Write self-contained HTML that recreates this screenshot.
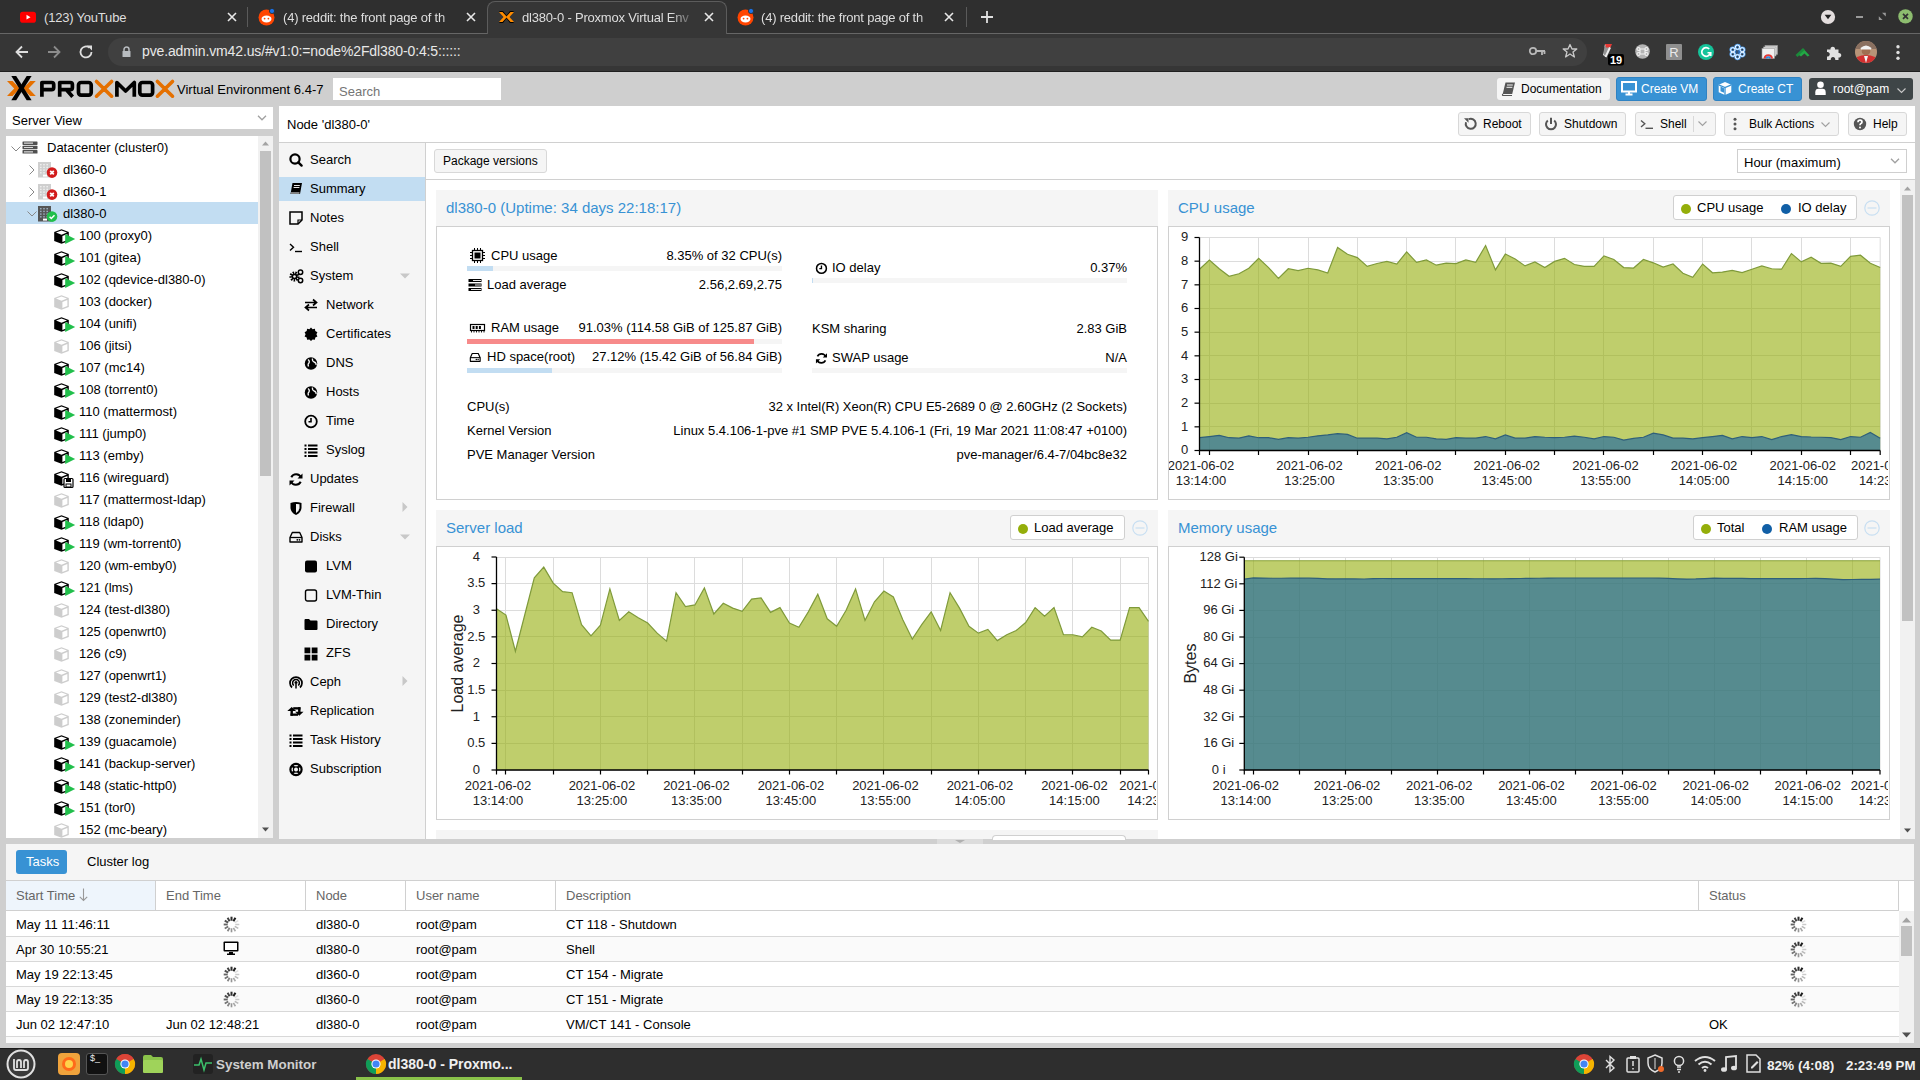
<!DOCTYPE html><html><head><meta charset="utf-8"><style>
*{box-sizing:border-box;margin:0;padding:0}
html,body{width:1920px;height:1080px;overflow:hidden;background:#cfcfcf;font-family:"Liberation Sans",sans-serif;font-size:13px;color:#000}
.a{position:absolute}
.t{position:absolute;white-space:nowrap;line-height:15px}
svg{position:absolute;overflow:visible}
</style></head><body><div class="a" style="left:0px;top:0px;width:1920px;height:34px;background:#2f2f2f"></div><div class="a" style="left:0px;top:33px;width:1920px;height:1px;background:#666"></div><div class="a" style="left:487px;top:1px;width:240px;height:40px;background:#363636;border:1px solid #5c5c5c;border-bottom:none;border-radius:8px 8px 0 0"></div><div class="a" style="left:0px;top:34px;width:1920px;height:38px;background:#363636"></div><div class="a" style="left:0px;top:71px;width:1920px;height:1px;background:#1f1f1f"></div><svg style="left:20px;top:11px;" width="16" height="12" viewBox="0 0 16 12"><rect x="0" y="0.7" width="16" height="11" rx="2.8" fill="#f00"/><path d="M6.5 3.8 L10.5 6.2 L6.5 8.6Z" fill="#fff"/></svg><div class="t" style="left:44px;top:10px;font-size:13px;color:#dedede;letter-spacing:-0.2px">(123) YouTube</div><svg style="left:227px;top:12px;" width="10" height="10" viewBox="0 0 10 10"><path d="M1 1L9 9M9 1L1 9" stroke="#e8e8e8" stroke-width="1.6"/></svg><div class="a" style="left:247px;top:7px;width:1px;height:20px;background:#5a5a5a"></div><svg style="left:258px;top:8px;" width="18" height="18" viewBox="0 0 18 18"><circle cx="8.5" cy="9.5" r="8" fill="#ff4500"/><ellipse cx="8.5" cy="11" rx="5" ry="3.4" fill="#fff"/><circle cx="6.6" cy="10.6" r="0.9" fill="#ff4500"/><circle cx="10.4" cy="10.6" r="0.9" fill="#ff4500"/><circle cx="14" cy="3" r="2.6" fill="#1a73e8" stroke="#2a2a2a" stroke-width="0.8"/></svg><div class="t" style="left:283px;top:10px;font-size:13px;color:#dedede;letter-spacing:-0.2px;width:185px;overflow:hidden;-webkit-mask-image:linear-gradient(90deg,#000 85%,transparent)">(4) reddit: the front page of th</div><svg style="left:466px;top:12px;" width="10" height="10" viewBox="0 0 10 10"><path d="M1 1L9 9M9 1L1 9" stroke="#e8e8e8" stroke-width="1.6"/></svg><svg style="left:498px;top:9px;" width="17" height="16" viewBox="0 0 17 16"><path d="M1 2 L5 2 L8.5 6.5 L12 2 L16 2 L10.5 8 L16 14 L12 14 L8.5 9.5 L5 14 L1 14 L6.5 8Z" fill="#000"/><path d="M1 3 L4.5 3 L9 8 L4.5 13 L1 13 L5.5 8Z" fill="#ff8c00"/><path d="M16 3 L12.5 3 L8 8 L12.5 13 L16 13 L11.5 8Z" fill="#ff8c00"/></svg><div class="t" style="left:522px;top:10px;font-size:13px;color:#dedede;letter-spacing:-0.2px;width:175px;overflow:hidden;-webkit-mask-image:linear-gradient(90deg,#000 85%,transparent)">dl380-0 - Proxmox Virtual Env</div><svg style="left:704px;top:12px;" width="10" height="10" viewBox="0 0 10 10"><path d="M1 1L9 9M9 1L1 9" stroke="#e8e8e8" stroke-width="1.6"/></svg><svg style="left:737px;top:8px;" width="18" height="18" viewBox="0 0 18 18"><circle cx="8.5" cy="9.5" r="8" fill="#ff4500"/><ellipse cx="8.5" cy="11" rx="5" ry="3.4" fill="#fff"/><circle cx="6.6" cy="10.6" r="0.9" fill="#ff4500"/><circle cx="10.4" cy="10.6" r="0.9" fill="#ff4500"/><circle cx="14" cy="3" r="2.6" fill="#1a73e8" stroke="#2a2a2a" stroke-width="0.8"/></svg><div class="t" style="left:761px;top:10px;font-size:13px;color:#dedede;letter-spacing:-0.2px;width:185px;overflow:hidden;-webkit-mask-image:linear-gradient(90deg,#000 85%,transparent)">(4) reddit: the front page of th</div><svg style="left:944px;top:12px;" width="10" height="10" viewBox="0 0 10 10"><path d="M1 1L9 9M9 1L1 9" stroke="#e8e8e8" stroke-width="1.6"/></svg><div class="a" style="left:966px;top:7px;width:1px;height:20px;background:#5a5a5a"></div><svg style="left:979px;top:9px;" width="16" height="16" viewBox="0 0 16 16"><path d="M8 2V14M2 8H14" stroke="#e0e0e0" stroke-width="1.8"/></svg><svg style="left:1819px;top:8px;" width="18" height="18" viewBox="0 0 18 18"><circle cx="9" cy="9" r="7.1" fill="#e4dede"/><path d="M5.6 6.8 L12.4 6.8 L9 11.2Z" fill="#222"/></svg><div class="a" style="left:1856px;top:16px;width:7px;height:2px;background:#9a9a9a"></div><svg style="left:1878px;top:12px;" width="9" height="9" viewBox="0 0 9 9"><path d="M4 0.8H7.8V4.6Z M0.8 4.2V8H4.6Z" fill="#9a9a9a"/></svg><svg style="left:1896px;top:7px;" width="18" height="18" viewBox="0 0 18 18"><circle cx="9.5" cy="9.4" r="7.2" fill="#8dbd6f"/><path d="M7 6.9L12 11.9M12 6.9L7 11.9" stroke="#333" stroke-width="1.7"/></svg><svg style="left:14px;top:44px;" width="16" height="16" viewBox="0 0 16 16"><path d="M14 8H2.5M8 2.5L2.5 8L8 13.5" style="stroke:#dedede;stroke-width:1.8;fill:none"/></svg><svg style="left:46px;top:44px;" width="16" height="16" viewBox="0 0 16 16"><path d="M2 8H13.5M8 2.5L13.5 8L8 13.5" style="stroke:#8c8c8c;stroke-width:1.8;fill:none"/></svg><svg style="left:78px;top:44px;" width="16" height="16" viewBox="0 0 16 16"><path d="M13.5 8A5.5 5.5 0 1 1 11.5 3.7" style="stroke:#dedede;stroke-width:1.8;fill:none"/><path d="M9 1.5L14 1.5L14 6.5Z" fill="#dedede"/></svg><div class="a" style="left:108px;top:38px;width:1479px;height:28px;background:#404040;border-radius:14px"></div><svg style="left:122px;top:46px;" width="9" height="11" viewBox="0 0 9 11"><path d="M2 5V3.5A2.5 2.5 0 0 1 7 3.5V5" stroke="#b8bcc0" stroke-width="1.5" fill="none"/><rect x="0.5" y="5" width="8" height="6" rx="0.5" fill="#b8bcc0"/></svg><div class="t" style="left:142px;top:44px;font-size:14px;color:#e8e8e8;letter-spacing:-0.13px">pve.admin.vm42.us/#v1:0:=node%2Fdl380-0:4:5::::::</div><svg style="left:1529px;top:46px;" width="17" height="10" viewBox="0 0 17 10"><circle cx="4" cy="5" r="3.2" stroke="#b8b8b8" stroke-width="1.8" fill="none"/><path d="M7 5H16M13 5V9M15.5 5V8" stroke="#b8b8b8" stroke-width="1.8" fill="none"/></svg><svg style="left:1562px;top:43px;" width="16" height="16" viewBox="0 0 16 16"><path d="M8 1.5L10 6H14.8L11 9L12.4 14L8 11L3.6 14L5 9L1.2 6H6Z" stroke="#c8c8c8" stroke-width="1.3" fill="none" stroke-linejoin="round"/></svg><svg style="left:1602px;top:43px;" width="22" height="23" viewBox="0 0 22 23"><path d="M3 1H9L8 5Z" fill="#e53935"/><path d="M3 1L9 3L4 14L1 12Z" fill="#f0f0f0"/><circle cx="8" cy="8" r="7" fill="#3a3a3a" opacity="0.5"/><path d="M3 1H10L8.5 4.5H4Z" fill="#e53935"/><path d="M8 4.5L3.5 14" stroke="#eee" stroke-width="2"/><rect x="6" y="11" width="16" height="11.5" rx="2" fill="#000"/><text x="14" y="21" font-family="Liberation Sans" font-size="11" font-weight="bold" fill="#fff" text-anchor="middle">19</text></svg><svg style="left:1635px;top:44px;" width="15" height="15" viewBox="0 0 15 15"><circle cx="7.5" cy="7.5" r="7.3" fill="#b4b4b4"/><path d="M5 5H10V10H5ZM5 5A1.5 1.5 0 1 1 3.5 3.5A1.5 1.5 0 0 1 5 5M10 5A1.5 1.5 0 1 0 11.5 3.5A1.5 1.5 0 0 0 10 5M5 10A1.5 1.5 0 1 0 3.5 11.5A1.5 1.5 0 0 0 5 10M10 10A1.5 1.5 0 1 1 11.5 11.5A1.5 1.5 0 0 1 10 10" stroke="#f2f2f2" stroke-width="1.1" fill="none"/></svg><svg style="left:1666px;top:44px;" width="16" height="16" viewBox="0 0 16 16"><rect x="0" y="0" width="16" height="16" rx="1" fill="#8f8f8f"/><text x="8" y="13" font-family="Liberation Sans" font-size="13" fill="#eaeaea" text-anchor="middle">R</text></svg><svg style="left:1698px;top:44px;" width="16" height="16" viewBox="0 0 16 16"><circle cx="8" cy="8" r="8" fill="#15c39a"/><path d="M11.2 5A4.3 4.3 0 1 0 12.2 9.2" stroke="#fff" stroke-width="1.7" fill="none"/><path d="M9.5 8.8H12.8V12" stroke="#fff" stroke-width="1.5" fill="none"/></svg><svg style="left:1729px;top:44px;" width="17" height="16" viewBox="0 0 17 16"><g stroke="#4f9ff0" stroke-width="2.4" fill="none" stroke-linecap="round"><circle cx="8.5" cy="3.2" r="2.2"/><circle cx="8.5" cy="12.8" r="2.2"/><circle cx="3.8" cy="5.8" r="2.2"/><circle cx="13.2" cy="5.8" r="2.2"/><circle cx="3.8" cy="10.2" r="2.2"/><circle cx="13.2" cy="10.2" r="2.2"/></g><g stroke="#fff" stroke-width="1" fill="none"><circle cx="8.5" cy="3.2" r="2.2"/><circle cx="8.5" cy="12.8" r="2.2"/><circle cx="3.8" cy="5.8" r="2.2"/><circle cx="13.2" cy="5.8" r="2.2"/><circle cx="3.8" cy="10.2" r="2.2"/><circle cx="13.2" cy="10.2" r="2.2"/></g><path d="M6 8H11M9.5 6.5L11 8L9.5 9.5" stroke="#2a6fc0" stroke-width="1.2" fill="none"/></svg><svg style="left:1762px;top:45px;" width="16" height="14" viewBox="0 0 16 14"><rect x="3" y="0.5" width="12.5" height="9" fill="#d8d8d8" stroke="#999" stroke-width="0.6"/><rect x="1.5" y="2" width="12.5" height="9" fill="#e2e2e2" stroke="#999" stroke-width="0.6"/><rect x="0" y="3.5" width="12.5" height="10" fill="#f0f0f0" stroke="#999" stroke-width="0.6"/><path d="M2.5 13.5A3.8 3.8 0 0 1 10 13.5" stroke="#e53935" stroke-width="2" fill="none"/><path d="M4.3 13.5A2 2 0 0 1 8.2 13.5" stroke="#1e88e5" stroke-width="1.6" fill="none"/></svg><svg style="left:1795px;top:47px;" width="15" height="10" viewBox="0 0 15 10"><path d="M0.5 8L8 1L10 3L2.5 10Z" fill="#1b8a3a"/><path d="M4 8L9.5 3L14.5 8.5L12.5 9.5L9.5 6.5L6 9.5Z" fill="#22a845"/></svg><svg style="left:1826px;top:45px;" width="16" height="15" viewBox="0 0 16 15"><path d="M1 4.5H4.5A2.3 2.3 0 1 1 9 4.5H12.5V8A2.3 2.3 0 1 1 12.5 12.5V15H9.2A2.3 2.3 0 1 0 4.8 15H1V11.5A2.3 2.3 0 1 0 1 7Z" fill="#e2e2e2"/></svg><svg style="left:1855px;top:41px;" width="22" height="22" viewBox="0 0 22 22"><defs><clipPath id="av"><circle cx="11" cy="11" r="11"/></clipPath></defs><g clip-path="url(#av)"><rect width="22" height="22" fill="#b89478"/><rect x="0" y="0" width="22" height="8" fill="#8a7060"/><path d="M1 22L2 16Q11 12 20 16L21 22Z" fill="#d23030"/><path d="M9 15L11 22L13 15Z" fill="#f4f4f4"/><circle cx="11" cy="10" r="4.3" fill="#a06f52"/><path d="M5.5 7Q11 2 16.5 7L16 8.5H6Z" fill="#f2f2f2"/></g></svg><svg style="left:1896px;top:45px;" width="4" height="15" viewBox="0 0 4 15"><circle cx="2" cy="1.8" r="1.7" fill="#e0e0e0"/><circle cx="2" cy="7.5" r="1.7" fill="#e0e0e0"/><circle cx="2" cy="13.2" r="1.7" fill="#e0e0e0"/></svg><div class="a" style="left:0px;top:72px;width:1920px;height:1008px;background:#cfcfcf"></div><svg style="left:0px;top:72px;" width="180" height="34" viewBox="0 0 180 34"><path d="M7 9L12.6 9L19.8 16.4L12.6 24L7 24L14.2 16.4Z" fill="#e57000"/><path d="M35.8 9L30.2 9L23 16.4L30.2 24L35.8 24L28.6 16.4Z" fill="#e57000"/><path d="M11.3 4L16.2 4L31.6 28.2L26.7 28.2Z" fill="#000"/><path d="M26.7 4L31.6 4L16.2 28.2L11.3 28.2Z" fill="#000"/><g stroke="#000" stroke-width="3.7" fill="none" stroke-linejoin="round"><path d="M41.9 24.8V10.5H51.6Q53.7 10.5 53.7 12.6V15.6Q53.7 17.7 51.6 17.7H42"/><path d="M59.7 24.8V10.5H70.3Q72.4 10.5 72.4 12.6V15.6Q72.4 17.7 70.3 17.7H60M66.5 17.7L72.6 24.8"/><rect x="78.5" y="10.5" width="12.7" height="12.7" rx="2.6"/><path d="M116.9 24.8V10.5L125.6 19L134.3 10.5V24.8"/><rect x="139.8" y="10.5" width="12.8" height="12.7" rx="2.6"/></g><path d="M96.5 9.5L111.6 24.2M111.6 9.5L96.5 24.2M157.4 9.5L172.5 24.2M172.5 9.5L157.4 24.2" stroke="#e57000" stroke-width="3.6" stroke-linecap="round"/></svg><div class="t" style="left:177px;top:82px;">Virtual Environment 6.4-7</div><div class="a" style="left:333px;top:78px;width:168px;height:22px;background:#fff"></div><div class="t" style="left:339px;top:84px;color:#757575">Search</div><div class="a" style="left:1497px;top:78px;width:113px;height:22px;background:#f5f5f5;border-radius:3px"></div><svg style="left:1501px;top:81px;" width="15" height="16" viewBox="0 0 15 16"><path d="M4.5 1.5H14L11.2 13H1.7Z" fill="#555"/><path d="M6 4H11.8M5.5 6.3H11.3" stroke="#f5f5f5" stroke-width="1"/><path d="M1.7 13Q1 14.5 2.5 14.5H11" stroke="#555" stroke-width="1.2" fill="none"/></svg><div class="t" style="left:1521px;top:82px;font-size:12px">Documentation</div><div class="a" style="left:1616px;top:77px;width:91px;height:24px;background:#3892d4;border:1px solid #2f82c2;border-radius:3px"></div><svg style="left:1621px;top:81px;" width="16" height="15" viewBox="0 0 16 15"><rect x="1" y="1" width="14" height="9.5" stroke="#fff" stroke-width="2" fill="none"/><path d="M4.5 13.5H11.5M8 10.5V13.5" stroke="#fff" stroke-width="2"/></svg><div class="t" style="left:1641px;top:82px;color:#fff;font-size:12px">Create VM</div><div class="a" style="left:1713px;top:77px;width:89px;height:24px;background:#3892d4;border:1px solid #2f82c2;border-radius:3px"></div><svg style="left:1718px;top:81px;" width="14" height="15" viewBox="0 0 14 15"><path d="M7 1L13.3 3.8V11.2L7 14L0.7 11.2V3.8Z" fill="#fff"/><path d="M0.7 3.8L7 6.6L13.3 3.8M7 6.6V14" stroke="#3892d4" stroke-width="1.3" fill="none"/><path d="M2.5 5.5V10.2L6 11.8V7.2Z" fill="#3892d4"/></svg><div class="t" style="left:1738px;top:82px;color:#fff;font-size:12px">Create CT</div><div class="a" style="left:1809px;top:78px;width:104px;height:22px;background:#3e4547;border-radius:3px"></div><svg style="left:1815px;top:81px;" width="11" height="14" viewBox="0 0 11 14"><circle cx="5.5" cy="3.8" r="3.3" fill="#fff"/><path d="M0.3 14V11.2Q0.3 7.8 3.5 7.8H7.5Q10.7 7.8 10.7 11.2V14Z" fill="#fff"/></svg><div class="t" style="left:1833px;top:82px;color:#fff;font-size:12px">root@pam</div><svg style="left:1897px;top:88px;" width="9" height="5" viewBox="0 0 9 5"><path d="M0.5 0.5L4.5 4.5L8.5 0.5" stroke="#c8c8c8" stroke-width="1.1" fill="none"/></svg><div class="a" style="left:6px;top:107px;width:267px;height:22px;background:#fff"></div><div class="t" style="left:12px;top:113px;">Server View</div><svg style="left:257px;top:115px;" width="10" height="6" viewBox="0 0 10 6"><path d="M1 0.8L5 4.8L9 0.8" stroke="#a0a0a0" stroke-width="1.3" fill="none"/></svg><div class="a" style="left:6px;top:136px;width:267px;height:702px;background:#fff"></div><div class="a" style="left:258px;top:136px;width:15px;height:702px;background:#f1f1f1"></div><svg style="left:262px;top:141px;" width="7" height="5" viewBox="0 0 7 5"><path d="M0 4.5L3.5 0.5L7 4.5Z" fill="#a3a3a3"/></svg><div class="a" style="left:260px;top:151px;width:11px;height:325px;background:#c1c1c1"></div><svg style="left:262px;top:827px;" width="7" height="5" viewBox="0 0 7 5"><path d="M0 0.5L3.5 4.5L7 0.5Z" fill="#505050"/></svg><div class="a" style="left:6px;top:202px;width:252px;height:22px;background:#c2ddf2"></div><svg style="left:11px;top:146px;" width="10" height="6" viewBox="0 0 10 6"><path d="M0.5 0.5L5 5L9.5 0.5" stroke="#888" stroke-width="1" fill="none"/></svg><svg style="left:22px;top:141px;" width="16" height="13" viewBox="0 0 16 13"><rect x="0.5" y="0.5" width="15" height="3.4" rx="0.6" fill="#505050"/><rect x="0.5" y="4.8" width="15" height="3.4" rx="0.6" fill="#505050"/><rect x="0.5" y="9.1" width="15" height="3.4" rx="0.6" fill="#505050"/><path d="M2 2.2H11M2 6.5H11M2 10.8H11" stroke="#d8d8d8" stroke-width="1.2"/></svg><div class="t" style="left:47px;top:140px;">Datacenter (cluster0)</div><svg style="left:29px;top:165px;" width="6" height="10" viewBox="0 0 6 10"><path d="M0.5 0.5L5 5L0.5 9.5" stroke="#888" stroke-width="1" fill="none"/></svg><svg style="left:38px;top:162px;" width="20" height="17" viewBox="0 0 20 17"><rect x="0" y="0" width="13" height="15.5" fill="#cfcfcf"/><rect x="2.0" y="2.0" width="1.6" height="1.4" fill="#eee"/><rect x="5.2" y="2.0" width="1.6" height="1.4" fill="#eee"/><rect x="8.4" y="2.0" width="1.6" height="1.4" fill="#eee"/><rect x="2.0" y="4.7" width="1.6" height="1.4" fill="#eee"/><rect x="5.2" y="4.7" width="1.6" height="1.4" fill="#eee"/><rect x="8.4" y="4.7" width="1.6" height="1.4" fill="#eee"/><rect x="2.0" y="7.4" width="1.6" height="1.4" fill="#eee"/><rect x="5.2" y="7.4" width="1.6" height="1.4" fill="#eee"/><rect x="8.4" y="7.4" width="1.6" height="1.4" fill="#eee"/><rect x="2.0" y="10.1" width="1.6" height="1.4" fill="#eee"/><rect x="5.2" y="10.1" width="1.6" height="1.4" fill="#eee"/><rect x="8.4" y="10.1" width="1.6" height="1.4" fill="#eee"/><rect x="5" y="12.6" width="4" height="2" fill="#fff"/><circle cx="14" cy="10.6" r="5.3" fill="#d21c1c"/><path d="M12.2 8.8L15.8 12.4M15.8 8.8L12.2 12.4" stroke="#fff" stroke-width="1.7"/></svg><div class="t" style="left:63px;top:162px;">dl360-0</div><svg style="left:29px;top:187px;" width="6" height="10" viewBox="0 0 6 10"><path d="M0.5 0.5L5 5L0.5 9.5" stroke="#888" stroke-width="1" fill="none"/></svg><svg style="left:38px;top:184px;" width="20" height="17" viewBox="0 0 20 17"><rect x="0" y="0" width="13" height="15.5" fill="#cfcfcf"/><rect x="2.0" y="2.0" width="1.6" height="1.4" fill="#eee"/><rect x="5.2" y="2.0" width="1.6" height="1.4" fill="#eee"/><rect x="8.4" y="2.0" width="1.6" height="1.4" fill="#eee"/><rect x="2.0" y="4.7" width="1.6" height="1.4" fill="#eee"/><rect x="5.2" y="4.7" width="1.6" height="1.4" fill="#eee"/><rect x="8.4" y="4.7" width="1.6" height="1.4" fill="#eee"/><rect x="2.0" y="7.4" width="1.6" height="1.4" fill="#eee"/><rect x="5.2" y="7.4" width="1.6" height="1.4" fill="#eee"/><rect x="8.4" y="7.4" width="1.6" height="1.4" fill="#eee"/><rect x="2.0" y="10.1" width="1.6" height="1.4" fill="#eee"/><rect x="5.2" y="10.1" width="1.6" height="1.4" fill="#eee"/><rect x="8.4" y="10.1" width="1.6" height="1.4" fill="#eee"/><rect x="5" y="12.6" width="4" height="2" fill="#fff"/><circle cx="14" cy="10.6" r="5.3" fill="#d21c1c"/><path d="M12.2 8.8L15.8 12.4M15.8 8.8L12.2 12.4" stroke="#fff" stroke-width="1.7"/></svg><div class="t" style="left:63px;top:184px;">dl360-1</div><svg style="left:27px;top:211px;" width="10" height="6" viewBox="0 0 10 6"><path d="M0.5 0.5L5 5L9.5 0.5" stroke="#888" stroke-width="1" fill="none"/></svg><svg style="left:38px;top:206px;" width="20" height="17" viewBox="0 0 20 17"><rect x="0" y="0" width="13" height="15.5" fill="#555"/><rect x="2.0" y="2.0" width="1.6" height="1.4" fill="#9ab"/><rect x="5.2" y="2.0" width="1.6" height="1.4" fill="#9ab"/><rect x="8.4" y="2.0" width="1.6" height="1.4" fill="#9ab"/><rect x="2.0" y="4.7" width="1.6" height="1.4" fill="#9ab"/><rect x="5.2" y="4.7" width="1.6" height="1.4" fill="#9ab"/><rect x="8.4" y="4.7" width="1.6" height="1.4" fill="#9ab"/><rect x="2.0" y="7.4" width="1.6" height="1.4" fill="#9ab"/><rect x="5.2" y="7.4" width="1.6" height="1.4" fill="#9ab"/><rect x="8.4" y="7.4" width="1.6" height="1.4" fill="#9ab"/><rect x="2.0" y="10.1" width="1.6" height="1.4" fill="#9ab"/><rect x="5.2" y="10.1" width="1.6" height="1.4" fill="#9ab"/><rect x="8.4" y="10.1" width="1.6" height="1.4" fill="#9ab"/><rect x="5" y="12.6" width="4" height="2" fill="#fff"/><circle cx="14" cy="10.6" r="5.3" fill="#21bf4b"/><path d="M11.6 10.8L13.3 12.5L16.5 9.2" stroke="#fff" stroke-width="1.5" fill="none"/></svg><div class="t" style="left:63px;top:206px;">dl380-0</div><div class="a" style="left:6px;top:136px;width:252px;height:702px;overflow:hidden"><svg style="left:48px;top:93px;" width="22" height="16" viewBox="0 0 22 16"><path d="M7.5 0.2L14.8 3.1V11.9L7.5 14.8L0.2 11.9V3.1Z" fill="#000"/><path d="M7.5 1.5L13 3.6L7.5 5.8L2 3.6Z" fill="#fff"/><path d="M8.4 7.1L13.4 5.1V11L8.4 13.1Z" fill="#fff"/><path d="M11.2 5L21.2 10L11.2 15Z" fill="#21bf4b"/></svg><div class="t" style="left:73px;top:92px;">100 (proxy0)</div><svg style="left:48px;top:115px;" width="22" height="16" viewBox="0 0 22 16"><path d="M7.5 0.2L14.8 3.1V11.9L7.5 14.8L0.2 11.9V3.1Z" fill="#000"/><path d="M7.5 1.5L13 3.6L7.5 5.8L2 3.6Z" fill="#fff"/><path d="M8.4 7.1L13.4 5.1V11L8.4 13.1Z" fill="#fff"/><path d="M11.2 5L21.2 10L11.2 15Z" fill="#21bf4b"/></svg><div class="t" style="left:73px;top:114px;">101 (gitea)</div><svg style="left:48px;top:137px;" width="22" height="16" viewBox="0 0 22 16"><path d="M7.5 0.2L14.8 3.1V11.9L7.5 14.8L0.2 11.9V3.1Z" fill="#000"/><path d="M7.5 1.5L13 3.6L7.5 5.8L2 3.6Z" fill="#fff"/><path d="M8.4 7.1L13.4 5.1V11L8.4 13.1Z" fill="#fff"/><path d="M11.2 5L21.2 10L11.2 15Z" fill="#21bf4b"/></svg><div class="t" style="left:73px;top:136px;">102 (qdevice-dl380-0)</div><svg style="left:48px;top:159px;" width="22" height="16" viewBox="0 0 22 16"><path d="M7.5 0.2L14.8 3.1V11.9L7.5 14.8L0.2 11.9V3.1Z" fill="#cdcdcd"/><path d="M7.5 1.5L13 3.6L7.5 5.8L2 3.6Z" fill="#fff"/><path d="M8.4 7.1L13.4 5.1V11L8.4 13.1Z" fill="#fff"/></svg><div class="t" style="left:73px;top:158px;">103 (docker)</div><svg style="left:48px;top:181px;" width="22" height="16" viewBox="0 0 22 16"><path d="M7.5 0.2L14.8 3.1V11.9L7.5 14.8L0.2 11.9V3.1Z" fill="#000"/><path d="M7.5 1.5L13 3.6L7.5 5.8L2 3.6Z" fill="#fff"/><path d="M8.4 7.1L13.4 5.1V11L8.4 13.1Z" fill="#fff"/><path d="M11.2 5L21.2 10L11.2 15Z" fill="#21bf4b"/></svg><div class="t" style="left:73px;top:180px;">104 (unifi)</div><svg style="left:48px;top:203px;" width="22" height="16" viewBox="0 0 22 16"><path d="M7.5 0.2L14.8 3.1V11.9L7.5 14.8L0.2 11.9V3.1Z" fill="#cdcdcd"/><path d="M7.5 1.5L13 3.6L7.5 5.8L2 3.6Z" fill="#fff"/><path d="M8.4 7.1L13.4 5.1V11L8.4 13.1Z" fill="#fff"/></svg><div class="t" style="left:73px;top:202px;">106 (jitsi)</div><svg style="left:48px;top:225px;" width="22" height="16" viewBox="0 0 22 16"><path d="M7.5 0.2L14.8 3.1V11.9L7.5 14.8L0.2 11.9V3.1Z" fill="#000"/><path d="M7.5 1.5L13 3.6L7.5 5.8L2 3.6Z" fill="#fff"/><path d="M8.4 7.1L13.4 5.1V11L8.4 13.1Z" fill="#fff"/><path d="M11.2 5L21.2 10L11.2 15Z" fill="#21bf4b"/></svg><div class="t" style="left:73px;top:224px;">107 (mc14)</div><svg style="left:48px;top:247px;" width="22" height="16" viewBox="0 0 22 16"><path d="M7.5 0.2L14.8 3.1V11.9L7.5 14.8L0.2 11.9V3.1Z" fill="#000"/><path d="M7.5 1.5L13 3.6L7.5 5.8L2 3.6Z" fill="#fff"/><path d="M8.4 7.1L13.4 5.1V11L8.4 13.1Z" fill="#fff"/><path d="M11.2 5L21.2 10L11.2 15Z" fill="#21bf4b"/></svg><div class="t" style="left:73px;top:246px;">108 (torrent0)</div><svg style="left:48px;top:269px;" width="22" height="16" viewBox="0 0 22 16"><path d="M7.5 0.2L14.8 3.1V11.9L7.5 14.8L0.2 11.9V3.1Z" fill="#000"/><path d="M7.5 1.5L13 3.6L7.5 5.8L2 3.6Z" fill="#fff"/><path d="M8.4 7.1L13.4 5.1V11L8.4 13.1Z" fill="#fff"/><path d="M11.2 5L21.2 10L11.2 15Z" fill="#21bf4b"/></svg><div class="t" style="left:73px;top:268px;">110 (mattermost)</div><svg style="left:48px;top:291px;" width="22" height="16" viewBox="0 0 22 16"><path d="M7.5 0.2L14.8 3.1V11.9L7.5 14.8L0.2 11.9V3.1Z" fill="#000"/><path d="M7.5 1.5L13 3.6L7.5 5.8L2 3.6Z" fill="#fff"/><path d="M8.4 7.1L13.4 5.1V11L8.4 13.1Z" fill="#fff"/><path d="M11.2 5L21.2 10L11.2 15Z" fill="#21bf4b"/></svg><div class="t" style="left:73px;top:290px;">111 (jump0)</div><svg style="left:48px;top:313px;" width="22" height="16" viewBox="0 0 22 16"><path d="M7.5 0.2L14.8 3.1V11.9L7.5 14.8L0.2 11.9V3.1Z" fill="#000"/><path d="M7.5 1.5L13 3.6L7.5 5.8L2 3.6Z" fill="#fff"/><path d="M8.4 7.1L13.4 5.1V11L8.4 13.1Z" fill="#fff"/><path d="M11.2 5L21.2 10L11.2 15Z" fill="#21bf4b"/></svg><div class="t" style="left:73px;top:312px;">113 (emby)</div><svg style="left:48px;top:335px;" width="22" height="18" viewBox="0 0 22 18"><path d="M7.5 0.2L14.8 3.1V11.9L7.5 14.8L0.2 11.9V3.1Z" fill="#000"/><path d="M7.5 1.5L13 3.6L7.5 5.8L2 3.6Z" fill="#fff"/><path d="M8.4 7.1L13.4 5.1V11L8.4 13.1Z" fill="#fff"/><rect x="10" y="7.5" width="9" height="9" rx="1" fill="#fff" stroke="#000" stroke-width="1.2"/><rect x="12" y="8" width="5" height="3" fill="#000"/><rect x="12" y="13" width="5" height="3" fill="none" stroke="#000" stroke-width="1"/></svg><div class="t" style="left:73px;top:334px;">116 (wireguard)</div><svg style="left:48px;top:357px;" width="22" height="16" viewBox="0 0 22 16"><path d="M7.5 0.2L14.8 3.1V11.9L7.5 14.8L0.2 11.9V3.1Z" fill="#cdcdcd"/><path d="M7.5 1.5L13 3.6L7.5 5.8L2 3.6Z" fill="#fff"/><path d="M8.4 7.1L13.4 5.1V11L8.4 13.1Z" fill="#fff"/></svg><div class="t" style="left:73px;top:356px;">117 (mattermost-ldap)</div><svg style="left:48px;top:379px;" width="22" height="16" viewBox="0 0 22 16"><path d="M7.5 0.2L14.8 3.1V11.9L7.5 14.8L0.2 11.9V3.1Z" fill="#000"/><path d="M7.5 1.5L13 3.6L7.5 5.8L2 3.6Z" fill="#fff"/><path d="M8.4 7.1L13.4 5.1V11L8.4 13.1Z" fill="#fff"/><path d="M11.2 5L21.2 10L11.2 15Z" fill="#21bf4b"/></svg><div class="t" style="left:73px;top:378px;">118 (ldap0)</div><svg style="left:48px;top:401px;" width="22" height="16" viewBox="0 0 22 16"><path d="M7.5 0.2L14.8 3.1V11.9L7.5 14.8L0.2 11.9V3.1Z" fill="#000"/><path d="M7.5 1.5L13 3.6L7.5 5.8L2 3.6Z" fill="#fff"/><path d="M8.4 7.1L13.4 5.1V11L8.4 13.1Z" fill="#fff"/><path d="M11.2 5L21.2 10L11.2 15Z" fill="#21bf4b"/></svg><div class="t" style="left:73px;top:400px;">119 (wm-torrent0)</div><svg style="left:48px;top:423px;" width="22" height="16" viewBox="0 0 22 16"><path d="M7.5 0.2L14.8 3.1V11.9L7.5 14.8L0.2 11.9V3.1Z" fill="#cdcdcd"/><path d="M7.5 1.5L13 3.6L7.5 5.8L2 3.6Z" fill="#fff"/><path d="M8.4 7.1L13.4 5.1V11L8.4 13.1Z" fill="#fff"/></svg><div class="t" style="left:73px;top:422px;">120 (wm-emby0)</div><svg style="left:48px;top:445px;" width="22" height="16" viewBox="0 0 22 16"><path d="M7.5 0.2L14.8 3.1V11.9L7.5 14.8L0.2 11.9V3.1Z" fill="#000"/><path d="M7.5 1.5L13 3.6L7.5 5.8L2 3.6Z" fill="#fff"/><path d="M8.4 7.1L13.4 5.1V11L8.4 13.1Z" fill="#fff"/><path d="M11.2 5L21.2 10L11.2 15Z" fill="#21bf4b"/></svg><div class="t" style="left:73px;top:444px;">121 (lms)</div><svg style="left:48px;top:467px;" width="22" height="16" viewBox="0 0 22 16"><path d="M7.5 0.2L14.8 3.1V11.9L7.5 14.8L0.2 11.9V3.1Z" fill="#cdcdcd"/><path d="M7.5 1.5L13 3.6L7.5 5.8L2 3.6Z" fill="#fff"/><path d="M8.4 7.1L13.4 5.1V11L8.4 13.1Z" fill="#fff"/></svg><div class="t" style="left:73px;top:466px;">124 (test-dl380)</div><svg style="left:48px;top:489px;" width="22" height="16" viewBox="0 0 22 16"><path d="M7.5 0.2L14.8 3.1V11.9L7.5 14.8L0.2 11.9V3.1Z" fill="#cdcdcd"/><path d="M7.5 1.5L13 3.6L7.5 5.8L2 3.6Z" fill="#fff"/><path d="M8.4 7.1L13.4 5.1V11L8.4 13.1Z" fill="#fff"/></svg><div class="t" style="left:73px;top:488px;">125 (openwrt0)</div><svg style="left:48px;top:511px;" width="22" height="16" viewBox="0 0 22 16"><path d="M7.5 0.2L14.8 3.1V11.9L7.5 14.8L0.2 11.9V3.1Z" fill="#cdcdcd"/><path d="M7.5 1.5L13 3.6L7.5 5.8L2 3.6Z" fill="#fff"/><path d="M8.4 7.1L13.4 5.1V11L8.4 13.1Z" fill="#fff"/></svg><div class="t" style="left:73px;top:510px;">126 (c9)</div><svg style="left:48px;top:533px;" width="22" height="16" viewBox="0 0 22 16"><path d="M7.5 0.2L14.8 3.1V11.9L7.5 14.8L0.2 11.9V3.1Z" fill="#cdcdcd"/><path d="M7.5 1.5L13 3.6L7.5 5.8L2 3.6Z" fill="#fff"/><path d="M8.4 7.1L13.4 5.1V11L8.4 13.1Z" fill="#fff"/></svg><div class="t" style="left:73px;top:532px;">127 (openwrt1)</div><svg style="left:48px;top:555px;" width="22" height="16" viewBox="0 0 22 16"><path d="M7.5 0.2L14.8 3.1V11.9L7.5 14.8L0.2 11.9V3.1Z" fill="#cdcdcd"/><path d="M7.5 1.5L13 3.6L7.5 5.8L2 3.6Z" fill="#fff"/><path d="M8.4 7.1L13.4 5.1V11L8.4 13.1Z" fill="#fff"/></svg><div class="t" style="left:73px;top:554px;">129 (test2-dl380)</div><svg style="left:48px;top:577px;" width="22" height="16" viewBox="0 0 22 16"><path d="M7.5 0.2L14.8 3.1V11.9L7.5 14.8L0.2 11.9V3.1Z" fill="#cdcdcd"/><path d="M7.5 1.5L13 3.6L7.5 5.8L2 3.6Z" fill="#fff"/><path d="M8.4 7.1L13.4 5.1V11L8.4 13.1Z" fill="#fff"/></svg><div class="t" style="left:73px;top:576px;">138 (zoneminder)</div><svg style="left:48px;top:599px;" width="22" height="16" viewBox="0 0 22 16"><path d="M7.5 0.2L14.8 3.1V11.9L7.5 14.8L0.2 11.9V3.1Z" fill="#000"/><path d="M7.5 1.5L13 3.6L7.5 5.8L2 3.6Z" fill="#fff"/><path d="M8.4 7.1L13.4 5.1V11L8.4 13.1Z" fill="#fff"/><path d="M11.2 5L21.2 10L11.2 15Z" fill="#21bf4b"/></svg><div class="t" style="left:73px;top:598px;">139 (guacamole)</div><svg style="left:48px;top:621px;" width="22" height="16" viewBox="0 0 22 16"><path d="M7.5 0.2L14.8 3.1V11.9L7.5 14.8L0.2 11.9V3.1Z" fill="#000"/><path d="M7.5 1.5L13 3.6L7.5 5.8L2 3.6Z" fill="#fff"/><path d="M8.4 7.1L13.4 5.1V11L8.4 13.1Z" fill="#fff"/><path d="M11.2 5L21.2 10L11.2 15Z" fill="#21bf4b"/></svg><div class="t" style="left:73px;top:620px;">141 (backup-server)</div><svg style="left:48px;top:643px;" width="22" height="16" viewBox="0 0 22 16"><path d="M7.5 0.2L14.8 3.1V11.9L7.5 14.8L0.2 11.9V3.1Z" fill="#000"/><path d="M7.5 1.5L13 3.6L7.5 5.8L2 3.6Z" fill="#fff"/><path d="M8.4 7.1L13.4 5.1V11L8.4 13.1Z" fill="#fff"/><path d="M11.2 5L21.2 10L11.2 15Z" fill="#21bf4b"/></svg><div class="t" style="left:73px;top:642px;">148 (static-http0)</div><svg style="left:48px;top:665px;" width="22" height="16" viewBox="0 0 22 16"><path d="M7.5 0.2L14.8 3.1V11.9L7.5 14.8L0.2 11.9V3.1Z" fill="#000"/><path d="M7.5 1.5L13 3.6L7.5 5.8L2 3.6Z" fill="#fff"/><path d="M8.4 7.1L13.4 5.1V11L8.4 13.1Z" fill="#fff"/><path d="M11.2 5L21.2 10L11.2 15Z" fill="#21bf4b"/></svg><div class="t" style="left:73px;top:664px;">151 (tor0)</div><svg style="left:48px;top:687px;" width="22" height="16" viewBox="0 0 22 16"><path d="M7.5 0.2L14.8 3.1V11.9L7.5 14.8L0.2 11.9V3.1Z" fill="#cdcdcd"/><path d="M7.5 1.5L13 3.6L7.5 5.8L2 3.6Z" fill="#fff"/><path d="M8.4 7.1L13.4 5.1V11L8.4 13.1Z" fill="#fff"/></svg><div class="t" style="left:73px;top:686px;">152 (mc-beary)</div></div><div class="a" style="left:279px;top:106px;width:1636px;height:733px;background:#fff"></div><div class="t" style="left:287px;top:117px;">Node 'dl380-0'</div><div class="a" style="left:279px;top:142px;width:1636px;height:1px;background:#d0d0d0"></div><div class="a" style="left:1458px;top:112px;width:73px;height:24px;background:#f5f5f5;border:1px solid #d8d8d8;border-radius:3px"></div><svg style="left:1463px;top:117px;" width="14" height="14" viewBox="0 0 14 14"><path d="M3 5.2A5 5 0 1 0 5.8 2.2" stroke="#555" stroke-width="2" fill="none"/><path d="M1 1.2H5.5V5.7Z" fill="#555"/></svg><div class="t" style="left:1483px;top:117px;font-size:12px">Reboot</div><div class="a" style="left:1539px;top:112px;width:87px;height:24px;background:#f5f5f5;border:1px solid #d8d8d8;border-radius:3px"></div><svg style="left:1544px;top:117px;" width="14" height="14" viewBox="0 0 14 14"><path d="M3.8 3.5A5 5 0 1 0 10.2 3.5" stroke="#555" stroke-width="2" fill="none"/><path d="M7 0.8V7" stroke="#555" stroke-width="2"/></svg><div class="t" style="left:1564px;top:117px;font-size:12px">Shutdown</div><div class="a" style="left:1635px;top:112px;width:81px;height:24px;background:#f5f5f5;border:1px solid #d8d8d8;border-radius:3px"></div><svg style="left:1640px;top:117px;" width="14" height="14" viewBox="0 0 14 14"><path d="M1 3.5L4.8 6.8L1 10" stroke="#555" stroke-width="1.4" fill="none"/><path d="M5.5 11.3H13" stroke="#555" stroke-width="1.4"/></svg><div class="t" style="left:1660px;top:117px;font-size:12px">Shell</div><div class="a" style="left:1693px;top:116px;width:1px;height:16px;background:#d8d8d8"></div><svg style="left:1698px;top:121px;" width="9" height="5" viewBox="0 0 9 5"><path d="M0.5 0.5L4.5 4.5L8.5 0.5" stroke="#a0a0a0" stroke-width="1.1" fill="none"/></svg><div class="a" style="left:1724px;top:112px;width:115px;height:24px;background:#f5f5f5;border:1px solid #d8d8d8;border-radius:3px"></div><svg style="left:1728px;top:117px;" width="14" height="14" viewBox="0 0 14 14"><circle cx="7" cy="2.2" r="1.5" fill="#555"/><circle cx="7" cy="7" r="1.5" fill="#555"/><circle cx="7" cy="11.8" r="1.5" fill="#555"/></svg><div class="t" style="left:1749px;top:117px;font-size:12px">Bulk Actions</div><svg style="left:1821px;top:122px;" width="9" height="5" viewBox="0 0 9 5"><path d="M0.5 0.5L4.5 4.5L8.5 0.5" stroke="#a0a0a0" stroke-width="1.1" fill="none"/></svg><div class="a" style="left:1848px;top:112px;width:59px;height:24px;background:#f5f5f5;border:1px solid #d8d8d8;border-radius:3px"></div><svg style="left:1854px;top:117px;" width="14" height="14" viewBox="0 0 14 14"><circle cx="6" cy="7" r="6.2" fill="#555"/><path d="M4 5.2Q4 3.2 6 3.2Q8 3.2 8 5Q8 6.2 6.6 6.8Q6 7.2 6 8.3" stroke="#fff" stroke-width="1.7" fill="none"/><circle cx="6" cy="10.4" r="1" fill="#fff"/></svg><div class="t" style="left:1873px;top:117px;font-size:12px">Help</div><div class="a" style="left:279px;top:143px;width:147px;height:696px;background:#f5f5f5;border-right:1px solid #d0d0d0"></div><div class="a" style="left:279px;top:177px;width:146px;height:24px;background:#c2ddf2"></div><svg style="left:289px;top:153px;" width="15" height="15" viewBox="0 0 15 15"><circle cx="6" cy="6" r="4.6" stroke="#000" stroke-width="2.2" fill="none"/><path d="M9.3 9.3L12.6 12.6" stroke="#000" stroke-width="2.4" stroke-linecap="round"/></svg><div class="t" style="left:310px;top:152px;">Search</div><svg style="left:289px;top:182px;" width="15" height="15" viewBox="0 0 15 15"><path d="M3.5 1H13L11 12H1.5Z" fill="#000"/><path d="M5 3.5H10.8M4.6 5.5H10.4" stroke="#fff" stroke-width="0.9"/><path d="M2 11H10.5" stroke="#fff" stroke-width="1"/></svg><div class="t" style="left:310px;top:181px;">Summary</div><svg style="left:289px;top:211px;" width="15" height="15" viewBox="0 0 15 15"><path d="M1 1H13V9L9 13H1Z" stroke="#000" stroke-width="1.5" fill="none"/><path d="M9 13V9H13" stroke="#000" stroke-width="1.2" fill="none"/></svg><div class="t" style="left:310px;top:210px;">Notes</div><svg style="left:289px;top:240px;" width="15" height="15" viewBox="0 0 15 15"><path d="M1 4L4.5 7.2L1 10.4" stroke="#000" stroke-width="1.4" fill="none"/><path d="M6 11.5H13" stroke="#000" stroke-width="1.4"/></svg><div class="t" style="left:310px;top:239px;">Shell</div><svg style="left:289px;top:269px;" width="15" height="15" viewBox="0 0 15 15"><circle cx="5.5" cy="7.5" r="3.8" stroke="#000" stroke-width="2.6" fill="none" stroke-dasharray="1.5 1.1"/><circle cx="5.5" cy="7.5" r="3" fill="#000"/><circle cx="5.5" cy="7.5" r="1.3" fill="#f5f5f5"/><circle cx="11.5" cy="3.2" r="2.2" stroke="#000" stroke-width="1.5" fill="none"/><circle cx="11.5" cy="11.5" r="2.2" stroke="#000" stroke-width="1.5" fill="none"/></svg><div class="t" style="left:310px;top:268px;">System</div><svg style="left:304px;top:298px;" width="15" height="15" viewBox="0 0 15 15"><path d="M1 4.5H12M9 1.5L12.5 4.5L9 7.5" stroke="#000" stroke-width="1.7" fill="none"/><path d="M13 9.5H2M5 6.5L1.5 9.5L5 12.5" stroke="#000" stroke-width="1.7" fill="none"/></svg><div class="t" style="left:326px;top:297px;">Network</div><svg style="left:304px;top:327px;" width="15" height="15" viewBox="0 0 15 15"><path d="M7 0.5L8.6 2.2L10.9 1.8L11.3 4.1L13.4 5.2L12.4 7.3L13.4 9.4L11.3 10.5L10.9 12.8L8.6 12.4L7 14.1L5.4 12.4L3.1 12.8L2.7 10.5L0.6 9.4L1.6 7.3L0.6 5.2L2.7 4.1L3.1 1.8L5.4 2.2Z" fill="#000"/></svg><div class="t" style="left:326px;top:326px;">Certificates</div><svg style="left:304px;top:356px;" width="15" height="15" viewBox="0 0 15 15"><circle cx="7" cy="7.5" r="6.2" fill="#000"/><path d="M4 3.5Q6 5 5 7Q3.5 8 4.5 10.5M8.5 2.5Q8 5 10 6Q12.5 6.5 12 9" stroke="#f5f5f5" stroke-width="1.3" fill="none"/></svg><div class="t" style="left:326px;top:355px;">DNS</div><svg style="left:304px;top:385px;" width="15" height="15" viewBox="0 0 15 15"><circle cx="7" cy="7.5" r="6.2" fill="#000"/><path d="M4 3.5Q6 5 5 7Q3.5 8 4.5 10.5M8.5 2.5Q8 5 10 6Q12.5 6.5 12 9" stroke="#f5f5f5" stroke-width="1.3" fill="none"/></svg><div class="t" style="left:326px;top:384px;">Hosts</div><svg style="left:304px;top:414px;" width="15" height="15" viewBox="0 0 15 15"><circle cx="7" cy="7.5" r="5.8" stroke="#000" stroke-width="1.8" fill="none"/><path d="M7 4V7.8H4.5" stroke="#000" stroke-width="1.6" fill="none"/></svg><div class="t" style="left:326px;top:413px;">Time</div><svg style="left:304px;top:443px;" width="15" height="15" viewBox="0 0 15 15"><path d="M0.5 2.5H2.5M0.5 6H2.5M0.5 9.5H2.5M0.5 13H2.5" stroke="#000" stroke-width="2"/><path d="M4 2.5H13.5M4 6H13.5M4 9.5H13.5M4 13H13.5" stroke="#000" stroke-width="2"/></svg><div class="t" style="left:326px;top:442px;">Syslog</div><svg style="left:289px;top:472px;" width="15" height="15" viewBox="0 0 15 15"><path d="M12 5.5A5.3 5.3 0 0 0 2.3 5.2" stroke="#000" stroke-width="2" fill="none"/><path d="M2 9.5A5.3 5.3 0 0 0 11.7 9.8" stroke="#000" stroke-width="2" fill="none"/><path d="M13.5 1.5V6.5H8.5Z" fill="#000"/><path d="M0.5 13.5V8.5H5.5Z" fill="#000"/></svg><div class="t" style="left:310px;top:471px;">Updates</div><svg style="left:289px;top:501px;" width="15" height="15" viewBox="0 0 15 15"><path d="M1.5 2Q7 0 12.5 2V6.5Q12.5 11.5 7 14Q1.5 11.5 1.5 6.5Z" fill="#000"/><path d="M7 3V12Q10.5 10 10.5 6.5V3.3Q8.8 2.8 7 3Z" fill="#f5f5f5"/></svg><div class="t" style="left:310px;top:500px;">Firewall</div><svg style="left:289px;top:530px;" width="15" height="15" viewBox="0 0 15 15"><path d="M1 7.5L3.3 2.5H10.7L13 7.5V12H1Z" stroke="#000" stroke-width="1.4" fill="none" stroke-linejoin="round"/><path d="M1 7.5H13" stroke="#000" stroke-width="1.3"/><circle cx="10.5" cy="9.8" r="0.9" fill="#000"/><circle cx="8.3" cy="9.8" r="0.9" fill="#000"/></svg><div class="t" style="left:310px;top:529px;">Disks</div><svg style="left:304px;top:559px;" width="15" height="15" viewBox="0 0 15 15"><rect x="1" y="1.5" width="12" height="12" rx="2" fill="#000"/></svg><div class="t" style="left:326px;top:558px;">LVM</div><svg style="left:304px;top:588px;" width="15" height="15" viewBox="0 0 15 15"><rect x="1.5" y="2" width="11" height="11" rx="2" stroke="#000" stroke-width="1.4" fill="none"/></svg><div class="t" style="left:326px;top:587px;">LVM-Thin</div><svg style="left:304px;top:617px;" width="15" height="15" viewBox="0 0 15 15"><path d="M0.5 3Q0.5 2 1.5 2H5L6.5 3.5H12.5Q13.5 3.5 13.5 4.5V12Q13.5 13 12.5 13H1.5Q0.5 13 0.5 12Z" fill="#000"/></svg><div class="t" style="left:326px;top:616px;">Directory</div><svg style="left:304px;top:646px;" width="15" height="15" viewBox="0 0 15 15"><rect x="0.5" y="1.5" width="5.8" height="5.8" fill="#000"/><rect x="7.7" y="1.5" width="5.8" height="5.8" fill="#000"/><rect x="0.5" y="8.7" width="5.8" height="5.8" fill="#000"/><rect x="7.7" y="8.7" width="5.8" height="5.8" fill="#000"/></svg><div class="t" style="left:326px;top:645px;">ZFS</div><svg style="left:289px;top:675px;" width="15" height="15" viewBox="0 0 15 15"><path d="M3 12.5A6 6 0 1 1 11 12.5" stroke="#000" stroke-width="1.7" fill="none"/><path d="M4.8 10.5A3.4 3.4 0 1 1 9.2 10.5" stroke="#000" stroke-width="1.5" fill="none"/><circle cx="7" cy="7.5" r="1.5" fill="#000"/><path d="M7 9V13.5" stroke="#000" stroke-width="1.5"/></svg><div class="t" style="left:310px;top:674px;">Ceph</div><svg style="left:289px;top:704px;" width="15" height="15" viewBox="0 0 15 15"><path d="M-1.7 7L2.7 3L7.1 7Z" fill="#000"/><rect x="1.5" y="6.5" width="2.4" height="5.3" fill="#000"/><rect x="1.5" y="9.5" width="7.5" height="2.3" fill="#000"/><rect x="4.2" y="3.2" width="7.3" height="2.3" fill="#000"/><rect x="9.1" y="3.2" width="2.4" height="5" fill="#000"/><path d="M6.1 7.8H14.5L10.3 11.8Z" fill="#000"/></svg><div class="t" style="left:310px;top:703px;">Replication</div><svg style="left:289px;top:733px;" width="15" height="15" viewBox="0 0 15 15"><path d="M0.5 2.5H2.5M0.5 6H2.5M0.5 9.5H2.5M0.5 13H2.5" stroke="#000" stroke-width="2"/><path d="M4 2.5H13.5M4 6H13.5M4 9.5H13.5M4 13H13.5" stroke="#000" stroke-width="2"/></svg><div class="t" style="left:310px;top:732px;">Task History</div><svg style="left:289px;top:762px;" width="15" height="15" viewBox="0 0 15 15"><circle cx="7" cy="7.5" r="5.6" stroke="#000" stroke-width="2.2" fill="none"/><circle cx="7" cy="7.5" r="2.6" stroke="#000" stroke-width="1.2" fill="none"/><path d="M3 3.5L5.2 5.7M11 3.5L8.8 5.7M3 11.5L5.2 9.3M11 11.5L8.8 9.3" stroke="#000" stroke-width="2.4"/></svg><div class="t" style="left:310px;top:761px;">Subscription</div><svg style="left:400px;top:273px;" width="11" height="6" viewBox="0 0 11 6"><path d="M0 0.5H10L5 5.5Z" fill="#c8c8c8"/></svg><svg style="left:402px;top:502px;" width="6" height="11" viewBox="0 0 6 11"><path d="M0.5 0V10L5.5 5Z" fill="#c8c8c8"/></svg><svg style="left:400px;top:534px;" width="11" height="6" viewBox="0 0 11 6"><path d="M0 0.5H10L5 5.5Z" fill="#c8c8c8"/></svg><svg style="left:402px;top:676px;" width="6" height="11" viewBox="0 0 6 11"><path d="M0.5 0V10L5.5 5Z" fill="#c8c8c8"/></svg><div class="a" style="left:434px;top:149px;width:113px;height:24px;background:#f5f5f5;border:1px solid #d8d8d8;border-radius:3px"></div><div class="t" style="left:443px;top:154px;font-size:12px">Package versions</div><div class="a" style="left:426px;top:179px;width:1489px;height:1px;background:#d0d0d0"></div><div class="a" style="left:1737px;top:149px;width:170px;height:24px;background:#fff;border:1px solid #cfcfcf"></div><div class="t" style="left:1744px;top:155px;">Hour (maximum)</div><svg style="left:1890px;top:158px;" width="10" height="6" viewBox="0 0 10 6"><path d="M1 0.8L5 4.8L9 0.8" stroke="#a0a0a0" stroke-width="1.3" fill="none"/></svg><div class="a" style="left:1900px;top:180px;width:15px;height:659px;background:#f1f1f1"></div><svg style="left:1904px;top:186px;" width="7" height="5" viewBox="0 0 7 5"><path d="M0 4.5L3.5 0.5L7 4.5Z" fill="#a3a3a3"/></svg><div class="a" style="left:1902px;top:195px;width:11px;height:426px;background:#c1c1c1"></div><svg style="left:1904px;top:828px;" width="7" height="5" viewBox="0 0 7 5"><path d="M0 0.5L3.5 4.5L7 0.5Z" fill="#505050"/></svg><div class="a" style="left:436px;top:190px;width:722px;height:36px;background:#f5f5f5"></div><div class="t" style="left:446px;top:199px;color:#3892d4;font-size:15px;line-height:17px">dl380-0 (Uptime: 34 days 22:18:17)</div><div class="a" style="left:436px;top:226px;width:722px;height:274px;background:#fff;border:1px solid #d0d0d0"></div><svg style="left:470px;top:249px;" width="15" height="15" viewBox="0 0 15 15"><g transform="translate(0,-1)"><rect x="2.5" y="2.5" width="10" height="10" stroke="#000" stroke-width="1.3" fill="none"/><rect x="4.5" y="4.5" width="6" height="6" fill="#000"/><path d="M4.5 0V2.5M7.5 0V2.5M10.5 0V2.5M4.5 12.5V15M7.5 12.5V15M10.5 12.5V15M0 4.5H2.5M0 7.5H2.5M0 10.5H2.5M12.5 4.5H15M12.5 7.5H15M12.5 10.5H15" stroke="#000" stroke-width="1"/></g></svg><div class="t" style="left:491px;top:248px;">CPU usage</div><div class="t" style="left:82px;top:248px;width:700px;text-align:right">8.35% of 32 CPU(s)</div><div class="a" style="left:467px;top:266px;width:315px;height:5px;background:#f5f5f5"></div><div class="a" style="left:467px;top:266px;width:26px;height:5px;background:#c2ddf2"></div><svg style="left:468px;top:278px;" width="15" height="15" viewBox="0 0 15 15"><rect x="0.5" y="1" width="13" height="3" fill="#000"/><rect x="0.5" y="5.5" width="13" height="3" fill="#000"/><rect x="0.5" y="10" width="13" height="3" fill="#000"/><path d="M5 2.5H13M7 7H13M3 11.5H13" stroke="#fff" stroke-width="0.9"/></svg><div class="t" style="left:487px;top:277px;">Load average</div><div class="t" style="left:82px;top:277px;width:700px;text-align:right">2.56,2.69,2.75</div><svg style="left:470px;top:321px;" width="15" height="15" viewBox="0 0 15 15"><rect x="0.5" y="3.5" width="14" height="6" stroke="#000" stroke-width="1.2" fill="none"/><rect x="2.5" y="5" width="2" height="3" fill="#000"/><rect x="5.7" y="5" width="2" height="3" fill="#000"/><rect x="8.9" y="5" width="2" height="3" fill="#000"/><path d="M1.5 9.5V11.5M4 9.5V11.5M6.5 9.5V11.5M9 9.5V11.5M11.5 9.5V11.5M14 9.5V11.5" stroke="#000" stroke-width="0.9"/></svg><div class="t" style="left:491px;top:320px;">RAM usage</div><div class="t" style="left:82px;top:320px;width:700px;text-align:right">91.03% (114.58 GiB of 125.87 GiB)</div><div class="a" style="left:467px;top:339px;width:315px;height:5px;background:#f5f5f5"></div><div class="a" style="left:467px;top:339px;width:287px;height:5px;background:#f78a8a"></div><svg style="left:468px;top:350px;" width="15" height="15" viewBox="0 0 15 15"><g transform="translate(1.5,1.5) scale(0.82)"><path d="M1 7.5L3.3 2.5H10.7L13 7.5V12H1Z" stroke="#000" stroke-width="1.4" fill="none" stroke-linejoin="round"/><path d="M1 7.5H13" stroke="#000" stroke-width="1.3"/><circle cx="10.5" cy="9.8" r="0.9" fill="#000"/><circle cx="8.3" cy="9.8" r="0.9" fill="#000"/></g></svg><div class="t" style="left:487px;top:349px;">HD space(root)</div><div class="t" style="left:82px;top:349px;width:700px;text-align:right">27.12% (15.42 GiB of 56.84 GiB)</div><div class="a" style="left:467px;top:368px;width:315px;height:5px;background:#f5f5f5"></div><div class="a" style="left:467px;top:368px;width:85px;height:5px;background:#c2ddf2"></div><svg style="left:815px;top:261px;" width="15" height="15" viewBox="0 0 15 15"><g transform="translate(0.5,1) scale(0.85)"><circle cx="7" cy="7.5" r="5.8" stroke="#000" stroke-width="1.8" fill="none"/><path d="M7 4V7.8H4.5" stroke="#000" stroke-width="1.6" fill="none"/></g></svg><div class="t" style="left:832px;top:260px;">IO delay</div><div class="t" style="left:427px;top:260px;width:700px;text-align:right">0.37%</div><div class="a" style="left:812px;top:278px;width:315px;height:5px;background:#f5f5f5"></div><div class="a" style="left:812px;top:278px;width:1px;height:5px;background:#c2ddf2"></div><div class="t" style="left:812px;top:321px;">KSM sharing</div><div class="t" style="left:427px;top:321px;width:700px;text-align:right">2.83 GiB</div><svg style="left:815px;top:351px;" width="15" height="15" viewBox="0 0 15 15"><g transform="translate(0.5,1) scale(0.85)"><path d="M12 5.5A5.3 5.3 0 0 0 2.3 5.2" stroke="#000" stroke-width="2" fill="none"/><path d="M2 9.5A5.3 5.3 0 0 0 11.7 9.8" stroke="#000" stroke-width="2" fill="none"/><path d="M13.5 1.5V6.5H8.5Z" fill="#000"/><path d="M0.5 13.5V8.5H5.5Z" fill="#000"/></g></svg><div class="t" style="left:832px;top:350px;">SWAP usage</div><div class="t" style="left:427px;top:350px;width:700px;text-align:right">N/A</div><div class="a" style="left:812px;top:368px;width:315px;height:5px;background:#f5f5f5"></div><div class="t" style="left:467px;top:399px;">CPU(s)</div><div class="t" style="left:427px;top:399px;width:700px;text-align:right">32 x Intel(R) Xeon(R) CPU E5-2689 0 @ 2.60GHz (2 Sockets)</div><div class="t" style="left:467px;top:423px;">Kernel Version</div><div class="t" style="left:427px;top:423px;width:700px;text-align:right">Linux 5.4.106-1-pve #1 SMP PVE 5.4.106-1 (Fri, 19 Mar 2021 11:08:47 +0100)</div><div class="t" style="left:467px;top:447px;">PVE Manager Version</div><div class="t" style="left:427px;top:447px;width:700px;text-align:right">pve-manager/6.4-7/04bc8e32</div><div class="a" style="left:1168px;top:190px;width:722px;height:36px;background:#f5f5f5"></div><div class="t" style="left:1178px;top:199px;color:#3892d4;font-size:15px;line-height:17px">CPU usage</div><div class="a" style="left:1168px;top:226px;width:722px;height:274px;background:#fff;border:1px solid #d0d0d0"></div><div class="a" style="left:1673px;top:195px;width:184px;height:25px;background:#fff;border:1px solid #d0d0d0;border-radius:3px"></div><svg style="left:1681px;top:204px;" width="10" height="10" viewBox="0 0 10 10"><circle cx="5" cy="5" r="5" fill="#94ae0a"/></svg><div class="t" style="left:1697px;top:200px;">CPU usage</div><svg style="left:1781px;top:204px;" width="10" height="10" viewBox="0 0 10 10"><circle cx="5" cy="5" r="5" fill="#115fa6"/></svg><div class="t" style="left:1798px;top:200px;">IO delay</div><svg style="left:1864px;top:200px;" width="16" height="16" viewBox="0 0 16 16"><circle cx="8" cy="8" r="7.2" stroke="#c8dff2" stroke-width="1.2" fill="none"/><path d="M3.5 8H12.5" stroke="#c8dff2" stroke-width="1.2"/></svg><div class="a" style="left:1169px;top:227px;width:719px;height:272px;overflow:hidden"><svg style="left:0;top:0" width="720" height="272"><path d="M30.5 223.5H711.2" stroke="#dcdcdc" stroke-width="1"/><path d="M30.5 199.5H711.2" stroke="#dcdcdc" stroke-width="1"/><path d="M30.5 176.5H711.2" stroke="#dcdcdc" stroke-width="1"/><path d="M30.5 152.5H711.2" stroke="#dcdcdc" stroke-width="1"/><path d="M30.5 128.5H711.2" stroke="#dcdcdc" stroke-width="1"/><path d="M30.5 105.5H711.2" stroke="#dcdcdc" stroke-width="1"/><path d="M30.5 81.5H711.2" stroke="#dcdcdc" stroke-width="1"/><path d="M30.5 57.5H711.2" stroke="#dcdcdc" stroke-width="1"/><path d="M30.5 34.5H711.2" stroke="#dcdcdc" stroke-width="1"/><path d="M30.5 10.5H711.2" stroke="#dcdcdc" stroke-width="1"/><path d="M40.5 10.5V223.5" stroke="#dcdcdc" stroke-width="1"/><path d="M89.5 10.5V223.5" stroke="#dcdcdc" stroke-width="1"/><path d="M139.5 10.5V223.5" stroke="#dcdcdc" stroke-width="1"/><path d="M188.5 10.5V223.5" stroke="#dcdcdc" stroke-width="1"/><path d="M237.5 10.5V223.5" stroke="#dcdcdc" stroke-width="1"/><path d="M286.5 10.5V223.5" stroke="#dcdcdc" stroke-width="1"/><path d="M336.5 10.5V223.5" stroke="#dcdcdc" stroke-width="1"/><path d="M385.5 10.5V223.5" stroke="#dcdcdc" stroke-width="1"/><path d="M434.5 10.5V223.5" stroke="#dcdcdc" stroke-width="1"/><path d="M484.5 10.5V223.5" stroke="#dcdcdc" stroke-width="1"/><path d="M533.5 10.5V223.5" stroke="#dcdcdc" stroke-width="1"/><path d="M582.5 10.5V223.5" stroke="#dcdcdc" stroke-width="1"/><path d="M632.5 10.5V223.5" stroke="#dcdcdc" stroke-width="1"/><path d="M681.5 10.5V223.5" stroke="#dcdcdc" stroke-width="1"/><path d="M711.2 10.5V223.5" stroke="#dcdcdc" stroke-width="1"/><polygon points="30.50,223.5 30.50,42.21 40.37,32.98 50.23,41.74 60.10,49.31 69.96,46.71 79.83,41.27 89.69,31.33 99.56,40.56 109.42,51.44 119.29,41.74 129.15,43.63 139.02,41.27 148.88,42.92 158.75,46.00 168.61,20.44 178.48,27.30 188.34,30.62 198.21,39.37 208.07,36.53 217.94,34.40 227.80,37.01 237.67,24.94 247.53,35.35 257.40,32.98 267.27,38.19 277.13,36.06 287.00,36.53 296.86,32.98 306.73,35.35 316.59,18.55 326.46,42.92 336.32,27.07 346.19,32.04 356.05,38.90 365.92,34.88 375.78,40.56 385.65,34.40 395.51,31.33 405.38,37.48 415.24,39.37 425.11,39.37 434.97,28.96 444.84,32.51 454.70,40.56 464.57,41.03 474.43,32.51 484.30,35.82 494.17,40.08 504.03,37.01 513.90,46.24 523.76,50.26 533.63,37.01 543.49,45.76 553.36,45.05 563.22,43.40 573.09,45.53 582.95,42.21 592.82,38.90 602.68,41.74 612.55,42.21 622.41,26.59 632.28,34.88 642.14,30.14 652.01,36.30 661.87,36.06 671.74,39.37 681.60,29.43 691.47,28.25 701.33,36.30 711.20,40.56 711.20,223.5" fill="#94ae0a" fill-opacity="0.6"/><polyline points="30.50,42.21 40.37,32.98 50.23,41.74 60.10,49.31 69.96,46.71 79.83,41.27 89.69,31.33 99.56,40.56 109.42,51.44 119.29,41.74 129.15,43.63 139.02,41.27 148.88,42.92 158.75,46.00 168.61,20.44 178.48,27.30 188.34,30.62 198.21,39.37 208.07,36.53 217.94,34.40 227.80,37.01 237.67,24.94 247.53,35.35 257.40,32.98 267.27,38.19 277.13,36.06 287.00,36.53 296.86,32.98 306.73,35.35 316.59,18.55 326.46,42.92 336.32,27.07 346.19,32.04 356.05,38.90 365.92,34.88 375.78,40.56 385.65,34.40 395.51,31.33 405.38,37.48 415.24,39.37 425.11,39.37 434.97,28.96 444.84,32.51 454.70,40.56 464.57,41.03 474.43,32.51 484.30,35.82 494.17,40.08 504.03,37.01 513.90,46.24 523.76,50.26 533.63,37.01 543.49,45.76 553.36,45.05 563.22,43.40 573.09,45.53 582.95,42.21 592.82,38.90 602.68,41.74 612.55,42.21 622.41,26.59 632.28,34.88 642.14,30.14 652.01,36.30 661.87,36.06 671.74,39.37 681.60,29.43 691.47,28.25 701.33,36.30 711.20,40.56" fill="none" stroke="#7f9a3a" stroke-width="1.2"/><polygon points="30.50,223.5 30.50,210.72 40.37,209.54 50.23,208.35 60.10,210.72 69.96,211.19 79.83,208.83 89.69,210.72 99.56,210.72 109.42,212.38 119.29,210.72 129.15,211.19 139.02,210.25 148.88,208.83 158.75,207.88 168.61,206.70 178.48,207.41 188.34,211.19 198.21,211.19 208.07,211.19 217.94,211.90 227.80,210.25 237.67,205.75 247.53,210.25 257.40,210.25 267.27,211.90 277.13,212.38 287.00,210.72 296.86,211.19 306.73,211.19 316.59,209.54 326.46,211.90 336.32,207.88 346.19,211.19 356.05,211.19 365.92,209.54 375.78,210.25 385.65,210.72 395.51,210.25 405.38,209.06 415.24,210.25 425.11,211.90 434.97,209.54 444.84,210.25 454.70,213.09 464.57,211.43 474.43,210.25 484.30,206.22 494.17,207.88 504.03,211.19 513.90,211.19 523.76,211.90 533.63,210.72 543.49,209.54 553.36,208.35 563.22,211.90 573.09,209.54 582.95,210.72 592.82,209.54 602.68,212.61 612.55,209.54 622.41,207.64 632.28,209.54 642.14,210.01 652.01,210.25 661.87,210.72 671.74,212.61 681.60,209.54 691.47,210.25 701.33,205.51 711.20,211.19 711.20,223.5" fill="#115fa6" fill-opacity="0.6"/><polyline points="30.50,210.72 40.37,209.54 50.23,208.35 60.10,210.72 69.96,211.19 79.83,208.83 89.69,210.72 99.56,210.72 109.42,212.38 119.29,210.72 129.15,211.19 139.02,210.25 148.88,208.83 158.75,207.88 168.61,206.70 178.48,207.41 188.34,211.19 198.21,211.19 208.07,211.19 217.94,211.90 227.80,210.25 237.67,205.75 247.53,210.25 257.40,210.25 267.27,211.90 277.13,212.38 287.00,210.72 296.86,211.19 306.73,211.19 316.59,209.54 326.46,211.90 336.32,207.88 346.19,211.19 356.05,211.19 365.92,209.54 375.78,210.25 385.65,210.72 395.51,210.25 405.38,209.06 415.24,210.25 425.11,211.90 434.97,209.54 444.84,210.25 454.70,213.09 464.57,211.43 474.43,210.25 484.30,206.22 494.17,207.88 504.03,211.19 513.90,211.19 523.76,211.90 533.63,210.72 543.49,209.54 553.36,208.35 563.22,211.90 573.09,209.54 582.95,210.72 592.82,209.54 602.68,212.61 612.55,209.54 622.41,207.64 632.28,209.54 642.14,210.01 652.01,210.25 661.87,210.72 671.74,212.61 681.60,209.54 691.47,210.25 701.33,205.51 711.20,211.19" fill="none" stroke="#2f5f7a" stroke-width="1.2"/><path d="M30.5 10.5V223.5H711.2" stroke="#000" stroke-width="1.3" fill="none"/><path d="M25.5 223.5H30.5" stroke="#000" stroke-width="1.2"/><text x="15.5" y="227.3" text-anchor="middle" style="font-family:Liberation Sans;font-size:13px" fill="#222">0</text><path d="M25.5 199.83333333333331H30.5" stroke="#000" stroke-width="1.2"/><text x="15.5" y="203.6" text-anchor="middle" style="font-family:Liberation Sans;font-size:13px" fill="#222">1</text><path d="M25.5 176.16666666666669H30.5" stroke="#000" stroke-width="1.2"/><text x="15.5" y="180.0" text-anchor="middle" style="font-family:Liberation Sans;font-size:13px" fill="#222">2</text><path d="M25.5 152.5H30.5" stroke="#000" stroke-width="1.2"/><text x="15.5" y="156.3" text-anchor="middle" style="font-family:Liberation Sans;font-size:13px" fill="#222">3</text><path d="M25.5 128.83333333333331H30.5" stroke="#000" stroke-width="1.2"/><text x="15.5" y="132.6" text-anchor="middle" style="font-family:Liberation Sans;font-size:13px" fill="#222">4</text><path d="M25.5 105.16666666666669H30.5" stroke="#000" stroke-width="1.2"/><text x="15.5" y="109.0" text-anchor="middle" style="font-family:Liberation Sans;font-size:13px" fill="#222">5</text><path d="M25.5 81.5H30.5" stroke="#000" stroke-width="1.2"/><text x="15.5" y="85.3" text-anchor="middle" style="font-family:Liberation Sans;font-size:13px" fill="#222">6</text><path d="M25.5 57.83333333333337H30.5" stroke="#000" stroke-width="1.2"/><text x="15.5" y="61.6" text-anchor="middle" style="font-family:Liberation Sans;font-size:13px" fill="#222">7</text><path d="M25.5 34.16666666666663H30.5" stroke="#000" stroke-width="1.2"/><text x="15.5" y="38.0" text-anchor="middle" style="font-family:Liberation Sans;font-size:13px" fill="#222">8</text><path d="M25.5 10.5H30.5" stroke="#000" stroke-width="1.2"/><text x="15.5" y="14.3" text-anchor="middle" style="font-family:Liberation Sans;font-size:13px" fill="#222">9</text><path d="M30.5 223.5V228.0" stroke="#000" stroke-width="1.2"/><path d="M711.2 223.5V228.0" stroke="#000" stroke-width="1.2"/><path d="M40.5 223.5V228.0" stroke="#000" stroke-width="1.2"/><path d="M89.5 223.5V228.0" stroke="#000" stroke-width="1.2"/><path d="M139.5 223.5V228.0" stroke="#000" stroke-width="1.2"/><path d="M188.5 223.5V228.0" stroke="#000" stroke-width="1.2"/><path d="M237.5 223.5V228.0" stroke="#000" stroke-width="1.2"/><path d="M286.5 223.5V228.0" stroke="#000" stroke-width="1.2"/><path d="M336.5 223.5V228.0" stroke="#000" stroke-width="1.2"/><path d="M385.5 223.5V228.0" stroke="#000" stroke-width="1.2"/><path d="M434.5 223.5V228.0" stroke="#000" stroke-width="1.2"/><path d="M484.5 223.5V228.0" stroke="#000" stroke-width="1.2"/><path d="M533.5 223.5V228.0" stroke="#000" stroke-width="1.2"/><path d="M582.5 223.5V228.0" stroke="#000" stroke-width="1.2"/><path d="M632.5 223.5V228.0" stroke="#000" stroke-width="1.2"/><path d="M681.5 223.5V228.0" stroke="#000" stroke-width="1.2"/><text x="32.0" y="243.0" text-anchor="middle" style="font-family:Liberation Sans;font-size:13px" fill="#222">2021-06-02</text><text x="32.0" y="258.0" text-anchor="middle" style="font-family:Liberation Sans;font-size:13px" fill="#222">13:14:00</text><text x="140.5" y="243.0" text-anchor="middle" style="font-family:Liberation Sans;font-size:13px" fill="#222">2021-06-02</text><text x="140.5" y="258.0" text-anchor="middle" style="font-family:Liberation Sans;font-size:13px" fill="#222">13:25:00</text><text x="239.2" y="243.0" text-anchor="middle" style="font-family:Liberation Sans;font-size:13px" fill="#222">2021-06-02</text><text x="239.2" y="258.0" text-anchor="middle" style="font-family:Liberation Sans;font-size:13px" fill="#222">13:35:00</text><text x="337.8" y="243.0" text-anchor="middle" style="font-family:Liberation Sans;font-size:13px" fill="#222">2021-06-02</text><text x="337.8" y="258.0" text-anchor="middle" style="font-family:Liberation Sans;font-size:13px" fill="#222">13:45:00</text><text x="436.5" y="243.0" text-anchor="middle" style="font-family:Liberation Sans;font-size:13px" fill="#222">2021-06-02</text><text x="436.5" y="258.0" text-anchor="middle" style="font-family:Liberation Sans;font-size:13px" fill="#222">13:55:00</text><text x="535.1" y="243.0" text-anchor="middle" style="font-family:Liberation Sans;font-size:13px" fill="#222">2021-06-02</text><text x="535.1" y="258.0" text-anchor="middle" style="font-family:Liberation Sans;font-size:13px" fill="#222">14:05:00</text><text x="633.8" y="243.0" text-anchor="middle" style="font-family:Liberation Sans;font-size:13px" fill="#222">2021-06-02</text><text x="633.8" y="258.0" text-anchor="middle" style="font-family:Liberation Sans;font-size:13px" fill="#222">14:15:00</text><text x="715.2" y="243.0" text-anchor="middle" style="font-family:Liberation Sans;font-size:13px" fill="#222">2021-06-02</text><text x="715.2" y="258.0" text-anchor="middle" style="font-family:Liberation Sans;font-size:13px" fill="#222">14:23:00</text></svg></div><div class="a" style="left:436px;top:510px;width:722px;height:36px;background:#f5f5f5"></div><div class="t" style="left:446px;top:519px;color:#3892d4;font-size:15px;line-height:17px">Server load</div><div class="a" style="left:436px;top:546px;width:722px;height:274px;background:#fff;border:1px solid #d0d0d0"></div><div class="a" style="left:1010px;top:515px;width:115px;height:25px;background:#fff;border:1px solid #d0d0d0;border-radius:3px"></div><svg style="left:1018px;top:524px;" width="10" height="10" viewBox="0 0 10 10"><circle cx="5" cy="5" r="5" fill="#94ae0a"/></svg><div class="t" style="left:1034px;top:520px;">Load average</div><svg style="left:1132px;top:520px;" width="16" height="16" viewBox="0 0 16 16"><circle cx="8" cy="8" r="7.2" stroke="#c8dff2" stroke-width="1.2" fill="none"/><path d="M3.5 8H12.5" stroke="#c8dff2" stroke-width="1.2"/></svg><div class="a" style="left:437px;top:547px;width:719px;height:272px;overflow:hidden"><svg style="left:0;top:0" width="720" height="272"><path d="M59.5 223.5H711.5" stroke="#dcdcdc" stroke-width="1"/><path d="M59.5 196.5H711.5" stroke="#dcdcdc" stroke-width="1"/><path d="M59.5 169.5H711.5" stroke="#dcdcdc" stroke-width="1"/><path d="M59.5 143.5H711.5" stroke="#dcdcdc" stroke-width="1"/><path d="M59.5 116.5H711.5" stroke="#dcdcdc" stroke-width="1"/><path d="M59.5 89.5H711.5" stroke="#dcdcdc" stroke-width="1"/><path d="M59.5 63.5H711.5" stroke="#dcdcdc" stroke-width="1"/><path d="M59.5 36.5H711.5" stroke="#dcdcdc" stroke-width="1"/><path d="M59.5 10.5H711.5" stroke="#dcdcdc" stroke-width="1"/><path d="M68.5 10V223" stroke="#dcdcdc" stroke-width="1"/><path d="M116.5 10V223" stroke="#dcdcdc" stroke-width="1"/><path d="M163.5 10V223" stroke="#dcdcdc" stroke-width="1"/><path d="M210.5 10V223" stroke="#dcdcdc" stroke-width="1"/><path d="M257.5 10V223" stroke="#dcdcdc" stroke-width="1"/><path d="M305.5 10V223" stroke="#dcdcdc" stroke-width="1"/><path d="M352.5 10V223" stroke="#dcdcdc" stroke-width="1"/><path d="M399.5 10V223" stroke="#dcdcdc" stroke-width="1"/><path d="M446.5 10V223" stroke="#dcdcdc" stroke-width="1"/><path d="M494.5 10V223" stroke="#dcdcdc" stroke-width="1"/><path d="M541.5 10V223" stroke="#dcdcdc" stroke-width="1"/><path d="M588.5 10V223" stroke="#dcdcdc" stroke-width="1"/><path d="M635.5 10V223" stroke="#dcdcdc" stroke-width="1"/><path d="M683.5 10V223" stroke="#dcdcdc" stroke-width="1"/><path d="M711.5 10V223" stroke="#dcdcdc" stroke-width="1"/><polygon points="59.50,223 59.50,61.65 68.95,68.04 78.40,104.25 87.85,67.51 97.30,30.77 106.75,20.12 116.20,36.09 125.64,44.61 135.09,45.68 144.54,77.63 153.99,88.81 163.44,78.16 172.89,41.95 182.34,73.37 191.79,64.85 201.24,70.71 210.69,76.03 220.14,86.15 229.59,94.13 239.04,45.68 248.49,59.52 257.93,57.92 267.38,40.88 276.83,66.98 286.28,56.33 295.73,61.12 305.18,64.32 314.63,52.07 324.08,51.00 333.53,65.38 342.98,60.59 352.43,76.03 361.88,80.29 371.33,64.85 380.78,47.27 390.22,71.77 399.67,79.23 409.12,63.25 418.57,41.95 428.02,73.37 437.47,54.73 446.92,44.08 456.37,49.94 465.82,72.84 475.27,92.00 484.72,77.63 494.17,64.85 503.62,83.49 513.07,45.68 522.51,61.12 531.96,79.23 541.41,86.15 550.86,82.42 560.31,93.60 569.76,87.75 579.21,83.49 588.66,75.50 598.11,60.59 607.56,69.11 617.01,60.59 626.46,87.75 635.91,87.75 645.36,89.88 654.80,80.29 664.25,84.02 673.70,93.07 683.15,93.07 692.60,60.59 702.05,60.59 711.50,74.43 711.50,223" fill="#94ae0a" fill-opacity="0.6"/><polyline points="59.50,61.65 68.95,68.04 78.40,104.25 87.85,67.51 97.30,30.77 106.75,20.12 116.20,36.09 125.64,44.61 135.09,45.68 144.54,77.63 153.99,88.81 163.44,78.16 172.89,41.95 182.34,73.37 191.79,64.85 201.24,70.71 210.69,76.03 220.14,86.15 229.59,94.13 239.04,45.68 248.49,59.52 257.93,57.92 267.38,40.88 276.83,66.98 286.28,56.33 295.73,61.12 305.18,64.32 314.63,52.07 324.08,51.00 333.53,65.38 342.98,60.59 352.43,76.03 361.88,80.29 371.33,64.85 380.78,47.27 390.22,71.77 399.67,79.23 409.12,63.25 418.57,41.95 428.02,73.37 437.47,54.73 446.92,44.08 456.37,49.94 465.82,72.84 475.27,92.00 484.72,77.63 494.17,64.85 503.62,83.49 513.07,45.68 522.51,61.12 531.96,79.23 541.41,86.15 550.86,82.42 560.31,93.60 569.76,87.75 579.21,83.49 588.66,75.50 598.11,60.59 607.56,69.11 617.01,60.59 626.46,87.75 635.91,87.75 645.36,89.88 654.80,80.29 664.25,84.02 673.70,93.07 683.15,93.07 692.60,60.59 702.05,60.59 711.50,74.43" fill="none" stroke="#7f9a3a" stroke-width="1.2"/><path d="M59.5 10V223H711.5" stroke="#000" stroke-width="1.3" fill="none"/><path d="M54.5 223.0H59.5" stroke="#000" stroke-width="1.2"/><text x="39.30000000000001" y="226.8" text-anchor="middle" style="font-family:Liberation Sans;font-size:13px" fill="#222">0</text><path d="M54.5 196.375H59.5" stroke="#000" stroke-width="1.2"/><text x="39.30000000000001" y="200.2" text-anchor="middle" style="font-family:Liberation Sans;font-size:13px" fill="#222">0.5</text><path d="M54.5 169.75H59.5" stroke="#000" stroke-width="1.2"/><text x="39.30000000000001" y="173.6" text-anchor="middle" style="font-family:Liberation Sans;font-size:13px" fill="#222">1</text><path d="M54.5 143.125H59.5" stroke="#000" stroke-width="1.2"/><text x="39.30000000000001" y="146.9" text-anchor="middle" style="font-family:Liberation Sans;font-size:13px" fill="#222">1.5</text><path d="M54.5 116.5H59.5" stroke="#000" stroke-width="1.2"/><text x="39.30000000000001" y="120.3" text-anchor="middle" style="font-family:Liberation Sans;font-size:13px" fill="#222">2</text><path d="M54.5 89.875H59.5" stroke="#000" stroke-width="1.2"/><text x="39.30000000000001" y="93.7" text-anchor="middle" style="font-family:Liberation Sans;font-size:13px" fill="#222">2.5</text><path d="M54.5 63.25H59.5" stroke="#000" stroke-width="1.2"/><text x="39.30000000000001" y="67.0" text-anchor="middle" style="font-family:Liberation Sans;font-size:13px" fill="#222">3</text><path d="M54.5 36.625H59.5" stroke="#000" stroke-width="1.2"/><text x="39.30000000000001" y="40.4" text-anchor="middle" style="font-family:Liberation Sans;font-size:13px" fill="#222">3.5</text><path d="M54.5 10.0H59.5" stroke="#000" stroke-width="1.2"/><text x="39.30000000000001" y="13.8" text-anchor="middle" style="font-family:Liberation Sans;font-size:13px" fill="#222">4</text><path d="M59.5 223V227.5" stroke="#000" stroke-width="1.2"/><path d="M711.5 223V227.5" stroke="#000" stroke-width="1.2"/><path d="M68.5 223V227.5" stroke="#000" stroke-width="1.2"/><path d="M116.5 223V227.5" stroke="#000" stroke-width="1.2"/><path d="M163.5 223V227.5" stroke="#000" stroke-width="1.2"/><path d="M210.5 223V227.5" stroke="#000" stroke-width="1.2"/><path d="M257.5 223V227.5" stroke="#000" stroke-width="1.2"/><path d="M305.5 223V227.5" stroke="#000" stroke-width="1.2"/><path d="M352.5 223V227.5" stroke="#000" stroke-width="1.2"/><path d="M399.5 223V227.5" stroke="#000" stroke-width="1.2"/><path d="M446.5 223V227.5" stroke="#000" stroke-width="1.2"/><path d="M494.5 223V227.5" stroke="#000" stroke-width="1.2"/><path d="M541.5 223V227.5" stroke="#000" stroke-width="1.2"/><path d="M588.5 223V227.5" stroke="#000" stroke-width="1.2"/><path d="M635.5 223V227.5" stroke="#000" stroke-width="1.2"/><path d="M683.5 223V227.5" stroke="#000" stroke-width="1.2"/><text x="61.0" y="242.5" text-anchor="middle" style="font-family:Liberation Sans;font-size:13px" fill="#222">2021-06-02</text><text x="61.0" y="257.5" text-anchor="middle" style="font-family:Liberation Sans;font-size:13px" fill="#222">13:14:00</text><text x="164.9" y="242.5" text-anchor="middle" style="font-family:Liberation Sans;font-size:13px" fill="#222">2021-06-02</text><text x="164.9" y="257.5" text-anchor="middle" style="font-family:Liberation Sans;font-size:13px" fill="#222">13:25:00</text><text x="259.4" y="242.5" text-anchor="middle" style="font-family:Liberation Sans;font-size:13px" fill="#222">2021-06-02</text><text x="259.4" y="257.5" text-anchor="middle" style="font-family:Liberation Sans;font-size:13px" fill="#222">13:35:00</text><text x="353.9" y="242.5" text-anchor="middle" style="font-family:Liberation Sans;font-size:13px" fill="#222">2021-06-02</text><text x="353.9" y="257.5" text-anchor="middle" style="font-family:Liberation Sans;font-size:13px" fill="#222">13:45:00</text><text x="448.4" y="242.5" text-anchor="middle" style="font-family:Liberation Sans;font-size:13px" fill="#222">2021-06-02</text><text x="448.4" y="257.5" text-anchor="middle" style="font-family:Liberation Sans;font-size:13px" fill="#222">13:55:00</text><text x="542.9" y="242.5" text-anchor="middle" style="font-family:Liberation Sans;font-size:13px" fill="#222">2021-06-02</text><text x="542.9" y="257.5" text-anchor="middle" style="font-family:Liberation Sans;font-size:13px" fill="#222">14:05:00</text><text x="637.4" y="242.5" text-anchor="middle" style="font-family:Liberation Sans;font-size:13px" fill="#222">2021-06-02</text><text x="637.4" y="257.5" text-anchor="middle" style="font-family:Liberation Sans;font-size:13px" fill="#222">14:15:00</text><text x="715.5" y="242.5" text-anchor="middle" style="font-family:Liberation Sans;font-size:13px" fill="#222">2021-06-02</text><text x="715.5" y="257.5" text-anchor="middle" style="font-family:Liberation Sans;font-size:13px" fill="#222">14:23:00</text><text x="0" y="0" transform="translate(26,116.5) rotate(-90)" text-anchor="middle" style="font-family:Liberation Sans;font-size:16px" fill="#222">Load average</text></svg></div><div class="a" style="left:1168px;top:510px;width:722px;height:36px;background:#f5f5f5"></div><div class="t" style="left:1178px;top:519px;color:#3892d4;font-size:15px;line-height:17px">Memory usage</div><div class="a" style="left:1168px;top:546px;width:722px;height:274px;background:#fff;border:1px solid #d0d0d0"></div><div class="a" style="left:1693px;top:515px;width:165px;height:25px;background:#fff;border:1px solid #d0d0d0;border-radius:3px"></div><svg style="left:1701px;top:524px;" width="10" height="10" viewBox="0 0 10 10"><circle cx="5" cy="5" r="5" fill="#94ae0a"/></svg><div class="t" style="left:1717px;top:520px;">Total</div><svg style="left:1762px;top:524px;" width="10" height="10" viewBox="0 0 10 10"><circle cx="5" cy="5" r="5" fill="#115fa6"/></svg><div class="t" style="left:1779px;top:520px;">RAM usage</div><svg style="left:1864px;top:520px;" width="16" height="16" viewBox="0 0 16 16"><circle cx="8" cy="8" r="7.2" stroke="#c8dff2" stroke-width="1.2" fill="none"/><path d="M3.5 8H12.5" stroke="#c8dff2" stroke-width="1.2"/></svg><div class="a" style="left:1169px;top:547px;width:719px;height:272px;overflow:hidden"><svg style="left:0;top:0" width="720" height="272"><path d="M75.29999999999995 223.5H711.0" stroke="#dcdcdc" stroke-width="1"/><path d="M75.29999999999995 196.5H711.0" stroke="#dcdcdc" stroke-width="1"/><path d="M75.29999999999995 169.5H711.0" stroke="#dcdcdc" stroke-width="1"/><path d="M75.29999999999995 143.5H711.0" stroke="#dcdcdc" stroke-width="1"/><path d="M75.29999999999995 116.5H711.0" stroke="#dcdcdc" stroke-width="1"/><path d="M75.29999999999995 90.5H711.0" stroke="#dcdcdc" stroke-width="1"/><path d="M75.29999999999995 63.5H711.0" stroke="#dcdcdc" stroke-width="1"/><path d="M75.29999999999995 36.5H711.0" stroke="#dcdcdc" stroke-width="1"/><path d="M75.29999999999995 10.5H711.0" stroke="#dcdcdc" stroke-width="1"/><path d="M84.5 10.200000000000045V223" stroke="#dcdcdc" stroke-width="1"/><path d="M130.5 10.200000000000045V223" stroke="#dcdcdc" stroke-width="1"/><path d="M176.5 10.200000000000045V223" stroke="#dcdcdc" stroke-width="1"/><path d="M222.5 10.200000000000045V223" stroke="#dcdcdc" stroke-width="1"/><path d="M268.5 10.200000000000045V223" stroke="#dcdcdc" stroke-width="1"/><path d="M314.5 10.200000000000045V223" stroke="#dcdcdc" stroke-width="1"/><path d="M360.5 10.200000000000045V223" stroke="#dcdcdc" stroke-width="1"/><path d="M406.5 10.200000000000045V223" stroke="#dcdcdc" stroke-width="1"/><path d="M453.5 10.200000000000045V223" stroke="#dcdcdc" stroke-width="1"/><path d="M499.5 10.200000000000045V223" stroke="#dcdcdc" stroke-width="1"/><path d="M545.5 10.200000000000045V223" stroke="#dcdcdc" stroke-width="1"/><path d="M591.5 10.200000000000045V223" stroke="#dcdcdc" stroke-width="1"/><path d="M637.5 10.200000000000045V223" stroke="#dcdcdc" stroke-width="1"/><path d="M683.5 10.200000000000045V223" stroke="#dcdcdc" stroke-width="1"/><path d="M711.0 10.200000000000045V223" stroke="#dcdcdc" stroke-width="1"/><polygon points="75.30,223 75.30,13.74 84.51,13.74 93.73,13.74 102.94,13.74 112.15,13.74 121.37,13.74 130.58,13.74 139.79,13.74 149.00,13.74 158.22,13.74 167.43,13.74 176.64,13.74 185.86,13.74 195.07,13.74 204.28,13.74 213.50,13.74 222.71,13.74 231.92,13.74 241.13,13.74 250.35,13.74 259.56,13.74 268.77,13.74 277.99,13.74 287.20,13.74 296.41,13.74 305.63,13.74 314.84,13.74 324.05,13.74 333.27,13.74 342.48,13.74 351.69,13.74 360.90,13.74 370.12,13.74 379.33,13.74 388.54,13.74 397.76,13.74 406.97,13.74 416.18,13.74 425.40,13.74 434.61,13.74 443.82,13.74 453.03,13.74 462.25,13.74 471.46,13.74 480.67,13.74 489.89,13.74 499.10,13.74 508.31,13.74 517.53,13.74 526.74,13.74 535.95,13.74 545.17,13.74 554.38,13.74 563.59,13.74 572.80,13.74 582.02,13.74 591.23,13.74 600.44,13.74 609.66,13.74 618.87,13.74 628.08,13.74 637.30,13.74 646.51,13.74 655.72,13.74 664.93,13.74 674.15,13.74 683.36,13.74 692.57,13.74 701.79,13.74 711.00,13.74 711.00,223" fill="#94ae0a" fill-opacity="0.6"/><polyline points="75.30,13.74 84.51,13.74 93.73,13.74 102.94,13.74 112.15,13.74 121.37,13.74 130.58,13.74 139.79,13.74 149.00,13.74 158.22,13.74 167.43,13.74 176.64,13.74 185.86,13.74 195.07,13.74 204.28,13.74 213.50,13.74 222.71,13.74 231.92,13.74 241.13,13.74 250.35,13.74 259.56,13.74 268.77,13.74 277.99,13.74 287.20,13.74 296.41,13.74 305.63,13.74 314.84,13.74 324.05,13.74 333.27,13.74 342.48,13.74 351.69,13.74 360.90,13.74 370.12,13.74 379.33,13.74 388.54,13.74 397.76,13.74 406.97,13.74 416.18,13.74 425.40,13.74 434.61,13.74 443.82,13.74 453.03,13.74 462.25,13.74 471.46,13.74 480.67,13.74 489.89,13.74 499.10,13.74 508.31,13.74 517.53,13.74 526.74,13.74 535.95,13.74 545.17,13.74 554.38,13.74 563.59,13.74 572.80,13.74 582.02,13.74 591.23,13.74 600.44,13.74 609.66,13.74 618.87,13.74 628.08,13.74 637.30,13.74 646.51,13.74 655.72,13.74 664.93,13.74 674.15,13.74 683.36,13.74 692.57,13.74 701.79,13.74 711.00,13.74" fill="none" stroke="#8aa33a" stroke-width="1.2"/><polygon points="75.30,223 75.30,32.20 84.51,30.88 93.73,31.07 102.94,31.26 112.15,31.24 121.37,31.17 130.58,31.10 139.79,31.19 149.00,31.28 158.22,31.87 167.43,31.91 176.64,31.80 185.86,31.89 195.07,31.99 204.28,31.69 213.50,31.51 222.71,31.53 231.92,31.55 241.13,31.58 250.35,31.60 259.56,31.62 268.77,31.64 277.99,31.67 287.20,31.69 296.41,31.71 305.63,31.74 314.84,31.76 324.05,31.78 333.27,31.77 342.48,31.64 351.69,31.51 360.90,31.38 370.12,31.25 379.33,31.12 388.54,31.00 397.76,31.00 406.97,31.00 416.18,31.00 425.40,31.00 434.61,31.00 443.82,31.00 453.03,31.00 462.25,31.00 471.46,31.00 480.67,31.00 489.89,31.16 499.10,31.47 508.31,31.78 517.53,32.08 526.74,31.96 535.95,31.58 545.17,31.20 554.38,31.29 563.59,31.37 572.80,31.46 582.02,31.54 591.23,31.60 600.44,31.60 609.66,31.60 618.87,31.59 628.08,31.54 637.30,31.49 646.51,31.43 655.72,31.59 664.93,32.06 674.15,32.53 683.36,32.51 692.57,32.41 701.79,32.30 711.00,32.20 711.00,223" fill="#115fa6" fill-opacity="0.6"/><polyline points="75.30,32.20 84.51,30.88 93.73,31.07 102.94,31.26 112.15,31.24 121.37,31.17 130.58,31.10 139.79,31.19 149.00,31.28 158.22,31.87 167.43,31.91 176.64,31.80 185.86,31.89 195.07,31.99 204.28,31.69 213.50,31.51 222.71,31.53 231.92,31.55 241.13,31.58 250.35,31.60 259.56,31.62 268.77,31.64 277.99,31.67 287.20,31.69 296.41,31.71 305.63,31.74 314.84,31.76 324.05,31.78 333.27,31.77 342.48,31.64 351.69,31.51 360.90,31.38 370.12,31.25 379.33,31.12 388.54,31.00 397.76,31.00 406.97,31.00 416.18,31.00 425.40,31.00 434.61,31.00 443.82,31.00 453.03,31.00 462.25,31.00 471.46,31.00 480.67,31.00 489.89,31.16 499.10,31.47 508.31,31.78 517.53,32.08 526.74,31.96 535.95,31.58 545.17,31.20 554.38,31.29 563.59,31.37 572.80,31.46 582.02,31.54 591.23,31.60 600.44,31.60 609.66,31.60 618.87,31.59 628.08,31.54 637.30,31.49 646.51,31.43 655.72,31.59 664.93,32.06 674.15,32.53 683.36,32.51 692.57,32.41 701.79,32.30 711.00,32.20" fill="none" stroke="#2f5f7a" stroke-width="1.2"/><path d="M75.29999999999995 10.200000000000045V223H711.0" stroke="#000" stroke-width="1.3" fill="none"/><path d="M70.29999999999995 223.0H75.29999999999995" stroke="#000" stroke-width="1.2"/><text x="49.700000000000045" y="226.8" text-anchor="middle" style="font-family:Liberation Sans;font-size:13px" fill="#222">0 i</text><path d="M70.29999999999995 196.39999999999998H75.29999999999995" stroke="#000" stroke-width="1.2"/><text x="49.700000000000045" y="200.2" text-anchor="middle" style="font-family:Liberation Sans;font-size:13px" fill="#222">16 Gi</text><path d="M70.29999999999995 169.79999999999995H75.29999999999995" stroke="#000" stroke-width="1.2"/><text x="49.700000000000045" y="173.6" text-anchor="middle" style="font-family:Liberation Sans;font-size:13px" fill="#222">32 Gi</text><path d="M70.29999999999995 143.20000000000005H75.29999999999995" stroke="#000" stroke-width="1.2"/><text x="49.700000000000045" y="147.0" text-anchor="middle" style="font-family:Liberation Sans;font-size:13px" fill="#222">48 Gi</text><path d="M70.29999999999995 116.60000000000002H75.29999999999995" stroke="#000" stroke-width="1.2"/><text x="49.700000000000045" y="120.4" text-anchor="middle" style="font-family:Liberation Sans;font-size:13px" fill="#222">64 Gi</text><path d="M70.29999999999995 90.0H75.29999999999995" stroke="#000" stroke-width="1.2"/><text x="49.700000000000045" y="93.8" text-anchor="middle" style="font-family:Liberation Sans;font-size:13px" fill="#222">80 Gi</text><path d="M70.29999999999995 63.40000000000009H75.29999999999995" stroke="#000" stroke-width="1.2"/><text x="49.700000000000045" y="67.2" text-anchor="middle" style="font-family:Liberation Sans;font-size:13px" fill="#222">96 Gi</text><path d="M70.29999999999995 36.80000000000007H75.29999999999995" stroke="#000" stroke-width="1.2"/><text x="49.700000000000045" y="40.6" text-anchor="middle" style="font-family:Liberation Sans;font-size:13px" fill="#222">112 Gi</text><path d="M70.29999999999995 10.200000000000045H75.29999999999995" stroke="#000" stroke-width="1.2"/><text x="49.700000000000045" y="14.0" text-anchor="middle" style="font-family:Liberation Sans;font-size:13px" fill="#222">128 Gi</text><path d="M75.29999999999995 223V227.5" stroke="#000" stroke-width="1.2"/><path d="M711.0 223V227.5" stroke="#000" stroke-width="1.2"/><path d="M84.5 223V227.5" stroke="#000" stroke-width="1.2"/><path d="M130.5 223V227.5" stroke="#000" stroke-width="1.2"/><path d="M176.5 223V227.5" stroke="#000" stroke-width="1.2"/><path d="M222.5 223V227.5" stroke="#000" stroke-width="1.2"/><path d="M268.5 223V227.5" stroke="#000" stroke-width="1.2"/><path d="M314.5 223V227.5" stroke="#000" stroke-width="1.2"/><path d="M360.5 223V227.5" stroke="#000" stroke-width="1.2"/><path d="M406.5 223V227.5" stroke="#000" stroke-width="1.2"/><path d="M453.5 223V227.5" stroke="#000" stroke-width="1.2"/><path d="M499.5 223V227.5" stroke="#000" stroke-width="1.2"/><path d="M545.5 223V227.5" stroke="#000" stroke-width="1.2"/><path d="M591.5 223V227.5" stroke="#000" stroke-width="1.2"/><path d="M637.5 223V227.5" stroke="#000" stroke-width="1.2"/><path d="M683.5 223V227.5" stroke="#000" stroke-width="1.2"/><text x="76.8" y="242.5" text-anchor="middle" style="font-family:Liberation Sans;font-size:13px" fill="#222">2021-06-02</text><text x="76.8" y="257.5" text-anchor="middle" style="font-family:Liberation Sans;font-size:13px" fill="#222">13:14:00</text><text x="178.1" y="242.5" text-anchor="middle" style="font-family:Liberation Sans;font-size:13px" fill="#222">2021-06-02</text><text x="178.1" y="257.5" text-anchor="middle" style="font-family:Liberation Sans;font-size:13px" fill="#222">13:25:00</text><text x="270.3" y="242.5" text-anchor="middle" style="font-family:Liberation Sans;font-size:13px" fill="#222">2021-06-02</text><text x="270.3" y="257.5" text-anchor="middle" style="font-family:Liberation Sans;font-size:13px" fill="#222">13:35:00</text><text x="362.4" y="242.5" text-anchor="middle" style="font-family:Liberation Sans;font-size:13px" fill="#222">2021-06-02</text><text x="362.4" y="257.5" text-anchor="middle" style="font-family:Liberation Sans;font-size:13px" fill="#222">13:45:00</text><text x="454.5" y="242.5" text-anchor="middle" style="font-family:Liberation Sans;font-size:13px" fill="#222">2021-06-02</text><text x="454.5" y="257.5" text-anchor="middle" style="font-family:Liberation Sans;font-size:13px" fill="#222">13:55:00</text><text x="546.7" y="242.5" text-anchor="middle" style="font-family:Liberation Sans;font-size:13px" fill="#222">2021-06-02</text><text x="546.7" y="257.5" text-anchor="middle" style="font-family:Liberation Sans;font-size:13px" fill="#222">14:05:00</text><text x="638.8" y="242.5" text-anchor="middle" style="font-family:Liberation Sans;font-size:13px" fill="#222">2021-06-02</text><text x="638.8" y="257.5" text-anchor="middle" style="font-family:Liberation Sans;font-size:13px" fill="#222">14:15:00</text><text x="715.0" y="242.5" text-anchor="middle" style="font-family:Liberation Sans;font-size:13px" fill="#222">2021-06-02</text><text x="715.0" y="257.5" text-anchor="middle" style="font-family:Liberation Sans;font-size:13px" fill="#222">14:23:00</text><text x="0" y="0" transform="translate(27,116.60000000000002) rotate(-90)" text-anchor="middle" style="font-family:Liberation Sans;font-size:16px" fill="#222">Bytes</text></svg></div><div class="a" style="left:436px;top:830px;width:722px;height:9px;background:#f5f5f5"></div><div class="a" style="left:992px;top:835px;width:134px;height:5px;background:#fff;border:1px solid #d0d0d0;border-bottom:none;border-radius:4px 4px 0 0"></div><div class="a" style="left:937px;top:839px;width:46px;height:5px;background:#dcdcdc"></div><svg style="left:955px;top:840px;" width="10" height="3" viewBox="0 0 10 3"><path d="M0 0H10L5 3Z" fill="#b0b0b0"/></svg><div class="a" style="left:6px;top:844px;width:1908px;height:199px;background:#fff"></div><div class="a" style="left:6px;top:844px;width:1908px;height:37px;background:#f5f5f5;border-bottom:1px solid #d0d0d0"></div><div class="a" style="left:16px;top:850px;width:51px;height:24px;background:#3892d4;border-radius:3px"></div><div class="t" style="left:26px;top:854px;color:#fff">Tasks</div><div class="t" style="left:87px;top:854px;">Cluster log</div><div class="a" style="left:6px;top:881px;width:1893px;height:30px;background:#fff;border-bottom:1px solid #d0d0d0"></div><div class="a" style="left:6px;top:881px;width:149px;height:29px;background:#eef5fc"></div><div class="t" style="left:16px;top:888px;color:#666">Start Time</div><div class="a" style="left:155px;top:881px;width:1px;height:29px;background:#d0d0d0"></div><div class="t" style="left:166px;top:888px;color:#666">End Time</div><div class="a" style="left:305px;top:881px;width:1px;height:29px;background:#d0d0d0"></div><div class="t" style="left:316px;top:888px;color:#666">Node</div><div class="a" style="left:405px;top:881px;width:1px;height:29px;background:#d0d0d0"></div><div class="t" style="left:416px;top:888px;color:#666">User name</div><div class="a" style="left:555px;top:881px;width:1px;height:29px;background:#d0d0d0"></div><div class="t" style="left:566px;top:888px;color:#666">Description</div><div class="a" style="left:1698px;top:881px;width:1px;height:29px;background:#d0d0d0"></div><div class="t" style="left:1709px;top:888px;color:#666">Status</div><div class="a" style="left:1898px;top:881px;width:1px;height:29px;background:#d0d0d0"></div><svg style="left:79px;top:888px;" width="9" height="14" viewBox="0 0 9 14"><path d="M4.5 0.5V12.5M0.8 8.8L4.5 12.5L8.2 8.8" stroke="#999" stroke-width="1.1" fill="none"/></svg><div class="a" style="left:6px;top:912px;width:1893px;height:25px;background:#fff;border-bottom:1px solid #d8d8d8"></div><div class="t" style="left:16px;top:917px;">May 11 11:46:11</div><svg style="left:222.5px;top:915.5px;" width="17" height="17" viewBox="0 0 17 17"><path d="M10.40 5.21L12.40 1.75" stroke="rgb(30,30,30)" stroke-width="2.10"/><path d="M8.50 4.70L8.50 0.70" stroke="rgb(47,47,47)" stroke-width="2.04"/><path d="M6.60 5.21L4.60 1.75" stroke="rgb(64,64,64)" stroke-width="1.97"/><path d="M5.21 6.60L1.75 4.60" stroke="rgb(81,81,81)" stroke-width="1.91"/><path d="M4.70 8.50L0.70 8.50" stroke="rgb(99,99,99)" stroke-width="1.85"/><path d="M5.21 10.40L1.75 12.40" stroke="rgb(116,116,116)" stroke-width="1.78"/><path d="M6.60 11.79L4.60 15.25" stroke="rgb(133,133,133)" stroke-width="1.72"/><path d="M8.50 12.30L8.50 16.30" stroke="rgb(150,150,150)" stroke-width="1.65"/><path d="M10.40 11.79L12.40 15.25" stroke="rgb(168,168,168)" stroke-width="1.59"/><path d="M11.79 10.40L15.25 12.40" stroke="rgb(185,185,185)" stroke-width="1.53"/><path d="M12.30 8.50L16.30 8.50" stroke="rgb(202,202,202)" stroke-width="1.46"/><path d="M11.79 6.60L15.25 4.60" stroke="rgb(220,220,220)" stroke-width="1.40"/></svg><div class="t" style="left:316px;top:917px;">dl380-0</div><div class="t" style="left:416px;top:917px;">root@pam</div><div class="t" style="left:566px;top:917px;">CT 118 - Shutdown</div><svg style="left:1789.5px;top:915.5px;" width="17" height="17" viewBox="0 0 17 17"><path d="M10.40 5.21L12.40 1.75" stroke="rgb(30,30,30)" stroke-width="2.10"/><path d="M8.50 4.70L8.50 0.70" stroke="rgb(47,47,47)" stroke-width="2.04"/><path d="M6.60 5.21L4.60 1.75" stroke="rgb(64,64,64)" stroke-width="1.97"/><path d="M5.21 6.60L1.75 4.60" stroke="rgb(81,81,81)" stroke-width="1.91"/><path d="M4.70 8.50L0.70 8.50" stroke="rgb(99,99,99)" stroke-width="1.85"/><path d="M5.21 10.40L1.75 12.40" stroke="rgb(116,116,116)" stroke-width="1.78"/><path d="M6.60 11.79L4.60 15.25" stroke="rgb(133,133,133)" stroke-width="1.72"/><path d="M8.50 12.30L8.50 16.30" stroke="rgb(150,150,150)" stroke-width="1.65"/><path d="M10.40 11.79L12.40 15.25" stroke="rgb(168,168,168)" stroke-width="1.59"/><path d="M11.79 10.40L15.25 12.40" stroke="rgb(185,185,185)" stroke-width="1.53"/><path d="M12.30 8.50L16.30 8.50" stroke="rgb(202,202,202)" stroke-width="1.46"/><path d="M11.79 6.60L15.25 4.60" stroke="rgb(220,220,220)" stroke-width="1.40"/></svg><div class="a" style="left:6px;top:937px;width:1893px;height:25px;background:#fafafa;border-bottom:1px solid #d8d8d8"></div><div class="t" style="left:16px;top:942px;">Apr 30 10:55:21</div><svg style="left:223px;top:941px;" width="16" height="14" viewBox="0 0 16 14"><rect x="0.5" y="0.5" width="15" height="10" rx="1" fill="#000"/><rect x="2" y="2" width="12" height="7" fill="#fff"/><rect x="6" y="11" width="4" height="2" fill="#000"/><rect x="4" y="12.5" width="8" height="1.5" fill="#000"/></svg><div class="t" style="left:316px;top:942px;">dl380-0</div><div class="t" style="left:416px;top:942px;">root@pam</div><div class="t" style="left:566px;top:942px;">Shell</div><svg style="left:1789.5px;top:940.5px;" width="17" height="17" viewBox="0 0 17 17"><path d="M10.40 5.21L12.40 1.75" stroke="rgb(30,30,30)" stroke-width="2.10"/><path d="M8.50 4.70L8.50 0.70" stroke="rgb(47,47,47)" stroke-width="2.04"/><path d="M6.60 5.21L4.60 1.75" stroke="rgb(64,64,64)" stroke-width="1.97"/><path d="M5.21 6.60L1.75 4.60" stroke="rgb(81,81,81)" stroke-width="1.91"/><path d="M4.70 8.50L0.70 8.50" stroke="rgb(99,99,99)" stroke-width="1.85"/><path d="M5.21 10.40L1.75 12.40" stroke="rgb(116,116,116)" stroke-width="1.78"/><path d="M6.60 11.79L4.60 15.25" stroke="rgb(133,133,133)" stroke-width="1.72"/><path d="M8.50 12.30L8.50 16.30" stroke="rgb(150,150,150)" stroke-width="1.65"/><path d="M10.40 11.79L12.40 15.25" stroke="rgb(168,168,168)" stroke-width="1.59"/><path d="M11.79 10.40L15.25 12.40" stroke="rgb(185,185,185)" stroke-width="1.53"/><path d="M12.30 8.50L16.30 8.50" stroke="rgb(202,202,202)" stroke-width="1.46"/><path d="M11.79 6.60L15.25 4.60" stroke="rgb(220,220,220)" stroke-width="1.40"/></svg><div class="a" style="left:6px;top:962px;width:1893px;height:25px;background:#fff;border-bottom:1px solid #d8d8d8"></div><div class="t" style="left:16px;top:967px;">May 19 22:13:45</div><svg style="left:222.5px;top:965.5px;" width="17" height="17" viewBox="0 0 17 17"><path d="M10.40 5.21L12.40 1.75" stroke="rgb(30,30,30)" stroke-width="2.10"/><path d="M8.50 4.70L8.50 0.70" stroke="rgb(47,47,47)" stroke-width="2.04"/><path d="M6.60 5.21L4.60 1.75" stroke="rgb(64,64,64)" stroke-width="1.97"/><path d="M5.21 6.60L1.75 4.60" stroke="rgb(81,81,81)" stroke-width="1.91"/><path d="M4.70 8.50L0.70 8.50" stroke="rgb(99,99,99)" stroke-width="1.85"/><path d="M5.21 10.40L1.75 12.40" stroke="rgb(116,116,116)" stroke-width="1.78"/><path d="M6.60 11.79L4.60 15.25" stroke="rgb(133,133,133)" stroke-width="1.72"/><path d="M8.50 12.30L8.50 16.30" stroke="rgb(150,150,150)" stroke-width="1.65"/><path d="M10.40 11.79L12.40 15.25" stroke="rgb(168,168,168)" stroke-width="1.59"/><path d="M11.79 10.40L15.25 12.40" stroke="rgb(185,185,185)" stroke-width="1.53"/><path d="M12.30 8.50L16.30 8.50" stroke="rgb(202,202,202)" stroke-width="1.46"/><path d="M11.79 6.60L15.25 4.60" stroke="rgb(220,220,220)" stroke-width="1.40"/></svg><div class="t" style="left:316px;top:967px;">dl360-0</div><div class="t" style="left:416px;top:967px;">root@pam</div><div class="t" style="left:566px;top:967px;">CT 154 - Migrate</div><svg style="left:1789.5px;top:965.5px;" width="17" height="17" viewBox="0 0 17 17"><path d="M10.40 5.21L12.40 1.75" stroke="rgb(30,30,30)" stroke-width="2.10"/><path d="M8.50 4.70L8.50 0.70" stroke="rgb(47,47,47)" stroke-width="2.04"/><path d="M6.60 5.21L4.60 1.75" stroke="rgb(64,64,64)" stroke-width="1.97"/><path d="M5.21 6.60L1.75 4.60" stroke="rgb(81,81,81)" stroke-width="1.91"/><path d="M4.70 8.50L0.70 8.50" stroke="rgb(99,99,99)" stroke-width="1.85"/><path d="M5.21 10.40L1.75 12.40" stroke="rgb(116,116,116)" stroke-width="1.78"/><path d="M6.60 11.79L4.60 15.25" stroke="rgb(133,133,133)" stroke-width="1.72"/><path d="M8.50 12.30L8.50 16.30" stroke="rgb(150,150,150)" stroke-width="1.65"/><path d="M10.40 11.79L12.40 15.25" stroke="rgb(168,168,168)" stroke-width="1.59"/><path d="M11.79 10.40L15.25 12.40" stroke="rgb(185,185,185)" stroke-width="1.53"/><path d="M12.30 8.50L16.30 8.50" stroke="rgb(202,202,202)" stroke-width="1.46"/><path d="M11.79 6.60L15.25 4.60" stroke="rgb(220,220,220)" stroke-width="1.40"/></svg><div class="a" style="left:6px;top:987px;width:1893px;height:25px;background:#fafafa;border-bottom:1px solid #d8d8d8"></div><div class="t" style="left:16px;top:992px;">May 19 22:13:35</div><svg style="left:222.5px;top:990.5px;" width="17" height="17" viewBox="0 0 17 17"><path d="M10.40 5.21L12.40 1.75" stroke="rgb(30,30,30)" stroke-width="2.10"/><path d="M8.50 4.70L8.50 0.70" stroke="rgb(47,47,47)" stroke-width="2.04"/><path d="M6.60 5.21L4.60 1.75" stroke="rgb(64,64,64)" stroke-width="1.97"/><path d="M5.21 6.60L1.75 4.60" stroke="rgb(81,81,81)" stroke-width="1.91"/><path d="M4.70 8.50L0.70 8.50" stroke="rgb(99,99,99)" stroke-width="1.85"/><path d="M5.21 10.40L1.75 12.40" stroke="rgb(116,116,116)" stroke-width="1.78"/><path d="M6.60 11.79L4.60 15.25" stroke="rgb(133,133,133)" stroke-width="1.72"/><path d="M8.50 12.30L8.50 16.30" stroke="rgb(150,150,150)" stroke-width="1.65"/><path d="M10.40 11.79L12.40 15.25" stroke="rgb(168,168,168)" stroke-width="1.59"/><path d="M11.79 10.40L15.25 12.40" stroke="rgb(185,185,185)" stroke-width="1.53"/><path d="M12.30 8.50L16.30 8.50" stroke="rgb(202,202,202)" stroke-width="1.46"/><path d="M11.79 6.60L15.25 4.60" stroke="rgb(220,220,220)" stroke-width="1.40"/></svg><div class="t" style="left:316px;top:992px;">dl360-0</div><div class="t" style="left:416px;top:992px;">root@pam</div><div class="t" style="left:566px;top:992px;">CT 151 - Migrate</div><svg style="left:1789.5px;top:990.5px;" width="17" height="17" viewBox="0 0 17 17"><path d="M10.40 5.21L12.40 1.75" stroke="rgb(30,30,30)" stroke-width="2.10"/><path d="M8.50 4.70L8.50 0.70" stroke="rgb(47,47,47)" stroke-width="2.04"/><path d="M6.60 5.21L4.60 1.75" stroke="rgb(64,64,64)" stroke-width="1.97"/><path d="M5.21 6.60L1.75 4.60" stroke="rgb(81,81,81)" stroke-width="1.91"/><path d="M4.70 8.50L0.70 8.50" stroke="rgb(99,99,99)" stroke-width="1.85"/><path d="M5.21 10.40L1.75 12.40" stroke="rgb(116,116,116)" stroke-width="1.78"/><path d="M6.60 11.79L4.60 15.25" stroke="rgb(133,133,133)" stroke-width="1.72"/><path d="M8.50 12.30L8.50 16.30" stroke="rgb(150,150,150)" stroke-width="1.65"/><path d="M10.40 11.79L12.40 15.25" stroke="rgb(168,168,168)" stroke-width="1.59"/><path d="M11.79 10.40L15.25 12.40" stroke="rgb(185,185,185)" stroke-width="1.53"/><path d="M12.30 8.50L16.30 8.50" stroke="rgb(202,202,202)" stroke-width="1.46"/><path d="M11.79 6.60L15.25 4.60" stroke="rgb(220,220,220)" stroke-width="1.40"/></svg><div class="a" style="left:6px;top:1012px;width:1893px;height:25px;background:#fff;border-bottom:1px solid #d8d8d8"></div><div class="t" style="left:16px;top:1017px;">Jun 02 12:47:10</div><div class="t" style="left:166px;top:1017px;">Jun 02 12:48:21</div><div class="t" style="left:316px;top:1017px;">dl380-0</div><div class="t" style="left:416px;top:1017px;">root@pam</div><div class="t" style="left:566px;top:1017px;">VM/CT 141 - Console</div><div class="t" style="left:1709px;top:1017px;">OK</div><div class="a" style="left:6px;top:1037px;width:1893px;height:6px;background:#fafafa"></div><div class="a" style="left:1899px;top:911px;width:15px;height:132px;background:#f1f1f1"></div><svg style="left:1902px;top:917px;" width="9" height="6" viewBox="0 0 9 6"><path d="M0 5.5L4.5 0.5L9 5.5Z" fill="#a3a3a3"/></svg><div class="a" style="left:1901px;top:926px;width:11px;height:30px;background:#c1c1c1"></div><svg style="left:1902px;top:1032px;" width="9" height="6" viewBox="0 0 9 6"><path d="M0 0.5L4.5 5.5L9 0.5Z" fill="#505050"/></svg><div class="a" style="left:0px;top:1048px;width:1920px;height:32px;background:#2e2e2e;border-top:1px solid #1a1a1a"></div><svg style="left:6px;top:1049px;" width="30" height="30" viewBox="0 0 30 30"><circle cx="15" cy="15" r="13.5" stroke="#e0e0e0" stroke-width="2" fill="#3a3a3a"/><path d="M8 10V19Q8 21 10 21H20Q22 21 22 19V13Q22 11 20 11Q18 11 18 13V19M15 19V13Q15 11 13 11Q11 11 11 13V19" stroke="#e0e0e0" stroke-width="1.8" fill="none"/></svg><div class="a" style="left:58px;top:1053px;width:22px;height:22px;background:#f0a33c;border-radius:4px"></div><svg style="left:60px;top:1055px;" width="18" height="18" viewBox="0 0 18 18"><circle cx="9" cy="9" r="7" fill="#ff6a1a"/><circle cx="9" cy="9" r="4" fill="#ffd24a"/></svg><div class="a" style="left:86px;top:1053px;width:22px;height:22px;background:#111;border:1px solid #555;border-radius:3px"></div><div class="t" style="left:90px;top:1053px;color:#eee;font-size:9px;line-height:10px">$_</div><svg style="left:114px;top:1053px;" width="22" height="22" viewBox="0 0 22 22"><circle cx="11" cy="11" r="10" fill="#db4437"/><path d="M11 11L2.3 6A10 10 0 0 1 19.7 6Z" fill="#db4437"/><path d="M11 11L19.7 6A10 10 0 0 1 11 21Z" fill="#f4b400"/><path d="M11 11L11 21A10 10 0 0 1 2.3 6Z" fill="#0f9d58"/><circle cx="11" cy="11" r="4.6" fill="#fff"/><circle cx="11" cy="11" r="3.6" fill="#4285f4"/></svg><svg style="left:142px;top:1054px;" width="22" height="20" viewBox="0 0 22 20"><path d="M1 3Q1 1 3 1H9L11 3H19Q21 3 21 5V17Q21 19 19 19H3Q1 19 1 17Z" fill="#8ac24a"/><rect x="1" y="6" width="20" height="13" rx="1.5" fill="#9fd35a"/></svg><svg style="left:193px;top:1054px;" width="20" height="20" viewBox="0 0 20 20"><rect x="0" y="0" width="20" height="20" rx="3" fill="#222"/><path d="M1 11H6L8 5L11 16L13 9H19" stroke="#3cc06b" stroke-width="1.5" fill="none"/></svg><div class="t" style="left:216px;top:1057px;color:#cfcfcf;font-size:13.4px;font-weight:bold;line-height:15px">System Monitor</div><div class="a" style="left:356px;top:1077px;width:166px;height:3px;background:#8ac24a"></div><svg style="left:365px;top:1053px;" width="22" height="22" viewBox="0 0 22 22"><circle cx="11" cy="11" r="10" fill="#db4437"/><path d="M11 11L19.7 6A10 10 0 0 1 11 21Z" fill="#f4b400"/><path d="M11 11L11 21A10 10 0 0 1 2.3 6Z" fill="#0f9d58"/><circle cx="11" cy="11" r="4.6" fill="#fff"/><circle cx="11" cy="11" r="3.6" fill="#4285f4"/></svg><div class="t" style="left:388px;top:1057px;color:#f0f0f0;font-size:14px;font-weight:bold;line-height:15px">dl380-0 - Proxmo...</div><svg style="left:1573px;top:1053px;" width="22" height="22" viewBox="0 0 22 22"><circle cx="11" cy="11" r="10" fill="#db4437"/><path d="M11 11L19.7 6A10 10 0 0 1 11 21Z" fill="#f4b400"/><path d="M11 11L11 21A10 10 0 0 1 2.3 6Z" fill="#0f9d58"/><circle cx="11" cy="11" r="4.6" fill="#fff"/><circle cx="11" cy="11" r="3.6" fill="#4285f4"/></svg><svg style="left:1604px;top:1055px;" width="12" height="18" viewBox="0 0 12 18"><path d="M2 5L10 13L6 16.5V1.5L10 5L2 13" stroke="#e0e0e0" stroke-width="1.4" fill="none"/></svg><svg style="left:1626px;top:1055px;" width="14" height="18" viewBox="0 0 14 18"><rect x="1" y="3" width="12" height="14" rx="1" stroke="#e0e0e0" stroke-width="1.5" fill="none"/><rect x="4" y="1" width="6" height="3" fill="#e0e0e0"/><path d="M7 6V11M7 13V14.5" stroke="#e0e0e0" stroke-width="1.5"/></svg><svg style="left:1647px;top:1054px;" width="18" height="20" viewBox="0 0 18 20"><path d="M8 1L15 4V9Q15 15 8 18Q1 15 1 9V4Z" stroke="#e0e0e0" stroke-width="1.5" fill="none"/><path d="M8 4V15" stroke="#e0e0e0" stroke-width="1"/><circle cx="14" cy="15" r="3" fill="#f06a2a"/></svg><svg style="left:1673px;top:1055px;" width="12" height="18" viewBox="0 0 12 18"><circle cx="6" cy="6" r="4.6" stroke="#e0e0e0" stroke-width="1.5" fill="none"/><path d="M4 12H8M4 14.5H8M5 17H7" stroke="#e0e0e0" stroke-width="1.3"/></svg><svg style="left:1694px;top:1056px;" width="22" height="16" viewBox="0 0 22 16"><path d="M1 5Q11 -3 21 5" stroke="#e0e0e0" stroke-width="2" fill="none"/><path d="M4.5 8.5Q11 3 17.5 8.5" stroke="#e0e0e0" stroke-width="2" fill="none"/><path d="M8 12Q11 9.5 14 12" stroke="#e0e0e0" stroke-width="2" fill="none"/><circle cx="11" cy="14.5" r="1.4" fill="#e0e0e0"/></svg><svg style="left:1720px;top:1055px;" width="18" height="18" viewBox="0 0 18 18"><path d="M6 14V2L16 1V12" stroke="#e0e0e0" stroke-width="1.8" fill="none"/><ellipse cx="4" cy="14.5" rx="3" ry="2.3" fill="#e0e0e0"/><ellipse cx="14" cy="13" rx="3" ry="2.3" fill="#e0e0e0"/></svg><svg style="left:1745px;top:1054px;" width="18" height="20" viewBox="0 0 18 20"><path d="M2 1H11L15 5V18H2Z" stroke="#e0e0e0" stroke-width="1.5" fill="none"/><path d="M6 13L12 7L13.5 8.5L7.5 14.5H6Z" fill="#e0e0e0"/></svg><div class="t" style="left:1767px;top:1058px;color:#f0f0f0;font-size:13.6px;font-weight:bold;line-height:15px">82% (4:08)</div><div class="t" style="left:1846px;top:1058px;color:#f0f0f0;font-size:13.3px;font-weight:bold;line-height:15px">2:23:49 PM</div></body></html>
